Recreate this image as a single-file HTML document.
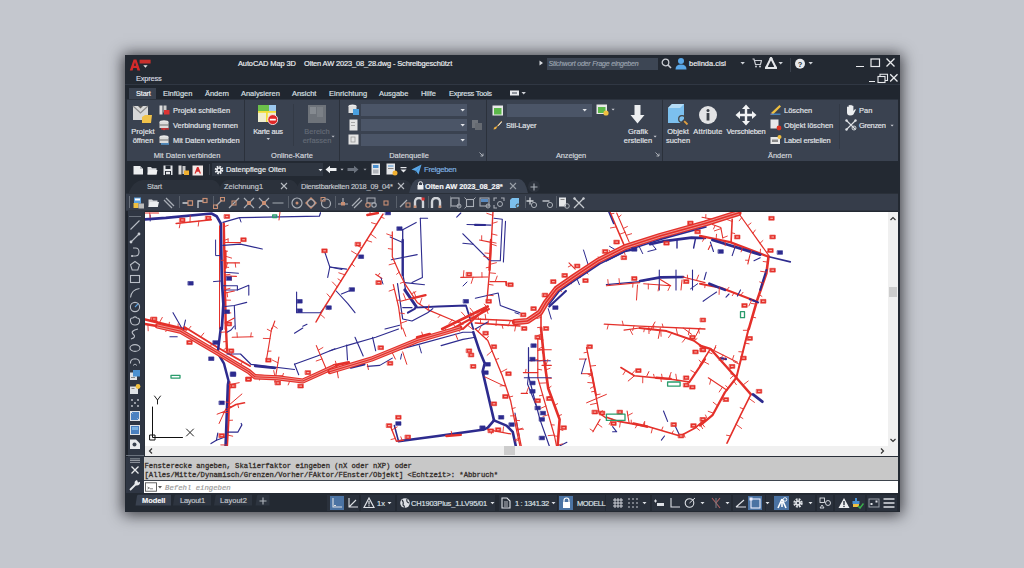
<!DOCTYPE html>
<html><head><meta charset="utf-8">
<style>
*{margin:0;padding:0;box-sizing:border-box}
html,body{width:1024px;height:568px;overflow:hidden;background:#c4c7ce;font-family:"Liberation Sans",sans-serif;position:relative}
.a{position:absolute;display:block}
#win{position:absolute;left:125px;top:55px;width:775px;height:457px;background:#232932;box-shadow:0 1px 14px 2px rgba(15,15,20,0.75);overflow:hidden}
.t{position:absolute;white-space:nowrap;line-height:10px;height:10px;-webkit-text-stroke:0.18px currentColor}
</style></head><body>
<div id="win">
<div class="a" style="left:0px;top:0px;width:774px;height:28px;background:#232932;"></div>
<div class="a" style="left:0px;top:28.6px;width:775px;height:1.4px;background:#303743;"></div>
<svg class="a" style="left:4px;top:3px;" width="22" height="14" viewBox="0 0 22 14"><path d="M0.8 12.5 L4.6 1.5 L7.4 1.5 L11.2 12.5 L8.4 12.5 L7.7 10 L4.3 10 L3.6 12.5Z M4.9 7.8 L7.1 7.8 L6 4.3Z" fill="#d42a2a"/><rect x="10.6" y="1.7" width="11" height="3.8" fill="#c9302c"/><path d="M14.3 7.2 L18.6 7.2 L16.45 9.8Z" fill="#e8e8e8"/></svg>
<div class="t" style="left:11.0px;top:19.2px;font-size:8.0px;color:#d9dce1;font-weight:normal;font-style:normal;font-family:'Liberation Sans',sans-serif;letter-spacing:-0.1935483870967742px;transform:scaleX(0.93);transform-origin:left center;">Express</div>
<div class="t" style="left:113.3px;top:3.8px;font-size:8.0px;color:#eef0f3;font-weight:normal;font-style:normal;font-family:'Liberation Sans',sans-serif;letter-spacing:-0.10752688172043011px;transform:scaleX(0.93);transform-origin:left center;">AutoCAD Map 3D</div>
<div class="t" style="left:178.8px;top:3.8px;font-size:8.0px;color:#eef0f3;font-weight:normal;font-style:normal;font-family:'Liberation Sans',sans-serif;letter-spacing:-0.15053763440860216px;transform:scaleX(0.93);transform-origin:left center;">Olten AW 2023_08_28.dwg - Schreibgeschützt</div>
<svg class="a" style="left:414px;top:5px;" width="5" height="6" viewBox="0 0 5 6"><path d="M0.5 0.5 L4 3 L0.5 5.5Z" fill="#d8dbe0"/></svg>
<div class="a" style="left:421.5px;top:2.5px;width:111px;height:12.5px;background:#3d4654;"></div>
<div class="t" style="left:423.5px;top:4.1px;font-size:7.0px;color:#9aa2ae;font-weight:normal;font-style:italic;font-family:'Liberation Sans',sans-serif;letter-spacing:-0.2px;">Stichwort oder Frage eingeben</div>
<svg class="a" style="left:536px;top:3px;" width="11" height="11" viewBox="0 0 11 11"><circle cx="4.5" cy="4.5" r="3.3" fill="none" stroke="#c9ccd2" stroke-width="1.3"/><path d="M7 7 L10 10" stroke="#c9ccd2" stroke-width="1.6"/></svg>
<svg class="a" style="left:550px;top:2px;" width="12" height="13" viewBox="0 0 12 13"><circle cx="6" cy="4" r="3" fill="#5aa8e8"/><path d="M0.5 12.5 Q0.5 7.5 6 7.5 Q11.5 7.5 11.5 12.5Z" fill="#5aa8e8"/></svg>
<div class="t" style="left:564.0px;top:4.0px;font-size:8.0px;color:#eef0f3;font-weight:normal;font-style:normal;font-family:'Liberation Sans',sans-serif;letter-spacing:0.02150537634408601px;transform:scaleX(0.93);transform-origin:left center;">belinda.cisl</div>
<svg class="a" style="left:615.3px;top:6.3px;" width="5.4" height="4.4" viewBox="0 0 5.4 4.4"><path d="M0.5 1.10 L4.90 1.10 L2.70 3.52Z" fill="#d0d3d8"/></svg>
<svg class="a" style="left:627px;top:3px;" width="10" height="10" viewBox="0 0 10 10"><path d="M0.5 1 L2 1 L3.5 6.5 L8.5 6.5 L9.5 2.5 L2.7 2.5" fill="none" stroke="#c9ccd2" stroke-width="1.2"/><circle cx="4" cy="8.5" r="1" fill="#c9ccd2"/><circle cx="8" cy="8.5" r="1" fill="#c9ccd2"/></svg>
<svg class="a" style="left:640px;top:2px;" width="12" height="12" viewBox="0 0 12 12"><path d="M6 1 L11 11 L1 11Z" fill="none" stroke="#e5e7ea" stroke-width="2"/><circle cx="6" cy="1.8" r="1.6" fill="#e5e7ea"/><circle cx="1.8" cy="10.5" r="1.6" fill="#e5e7ea"/><circle cx="10.2" cy="10.5" r="1.6" fill="#e5e7ea"/></svg>
<svg class="a" style="left:653.3px;top:6.3px;" width="5.4" height="4.4" viewBox="0 0 5.4 4.4"><path d="M0.5 1.10 L4.90 1.10 L2.70 3.52Z" fill="#d0d3d8"/></svg>
<div class="a" style="left:664.5px;top:2.5px;width:1px;height:14px;background:#3a414c;"></div>
<svg class="a" style="left:669px;top:3px;" width="12" height="12" viewBox="0 0 12 12"><circle cx="6" cy="5.8" r="5" fill="#e8eaed"/><text x="6" y="8.6" font-size="7.5" font-weight="bold" text-anchor="middle" fill="#2a2f37" font-family="Liberation Sans">?</text></svg>
<svg class="a" style="left:683.3px;top:6.3px;" width="5.4" height="4.4" viewBox="0 0 5.4 4.4"><path d="M0.5 1.10 L4.90 1.10 L2.70 3.52Z" fill="#d0d3d8"/></svg>
<div class="a" style="left:731px;top:10.5px;width:8px;height:1.3px;background:#e8eaed;"></div>
<svg class="a" style="left:745px;top:3px;" width="11" height="10" viewBox="0 0 11 10"><rect x="1" y="1" width="8.5" height="7.5" fill="none" stroke="#e8eaed" stroke-width="1.2"/></svg>
<svg class="a" style="left:760px;top:2px;" width="11" height="11" viewBox="0 0 11 11"><path d="M1.5 1.5 L9.5 9.5 M9.5 1.5 L1.5 9.5" stroke="#e8eaed" stroke-width="1.3"/></svg>
<div class="a" style="left:744px;top:25.5px;width:6px;height:1.3px;background:#e8eaed;"></div>
<svg class="a" style="left:752px;top:18px;" width="12" height="11" viewBox="0 0 12 11"><rect x="1" y="3.5" width="7" height="6" fill="none" stroke="#e8eaed" stroke-width="1.1"/><path d="M3 3.5 V1.2 H10.5 V7.5 H8" fill="none" stroke="#e8eaed" stroke-width="1.1"/></svg>
<svg class="a" style="left:764px;top:18px;" width="10" height="10" viewBox="0 0 10 10"><path d="M1.2 1.2 L8.5 8.5 M8.5 1.2 L1.2 8.5" stroke="#e8eaed" stroke-width="1.3"/></svg>
<div class="a" style="left:0px;top:30px;width:775px;height:14px;background:#20262f;"></div>
<div class="a" style="left:4px;top:32.5px;width:27px;height:12px;background:#3a4250;"></div>
<div class="t" style="left:10.7px;top:34.0px;font-size:8.0px;color:#f2f3f5;font-weight:normal;font-style:normal;font-family:'Liberation Sans',sans-serif;letter-spacing:-0.21505376344086022px;transform:scaleX(0.93);transform-origin:left center;">Start</div>
<div class="t" style="left:37.7px;top:34.0px;font-size:8.0px;color:#dde0e5;font-weight:normal;font-style:normal;font-family:'Liberation Sans',sans-serif;letter-spacing:0.0px;transform:scaleX(0.93);transform-origin:left center;">Einfügen</div>
<div class="t" style="left:79.7px;top:34.0px;font-size:8.0px;color:#dde0e5;font-weight:normal;font-style:normal;font-family:'Liberation Sans',sans-serif;letter-spacing:0.0px;transform:scaleX(0.93);transform-origin:left center;">Ändern</div>
<div class="t" style="left:116.2px;top:34.0px;font-size:8.0px;color:#dde0e5;font-weight:normal;font-style:normal;font-family:'Liberation Sans',sans-serif;letter-spacing:0.0px;transform:scaleX(0.93);transform-origin:left center;">Analysieren</div>
<div class="t" style="left:167.0px;top:34.0px;font-size:8.0px;color:#dde0e5;font-weight:normal;font-style:normal;font-family:'Liberation Sans',sans-serif;letter-spacing:0.0px;transform:scaleX(0.93);transform-origin:left center;">Ansicht</div>
<div class="t" style="left:204.0px;top:34.0px;font-size:8.0px;color:#dde0e5;font-weight:normal;font-style:normal;font-family:'Liberation Sans',sans-serif;letter-spacing:0.0967741935483871px;transform:scaleX(0.93);transform-origin:left center;">Einrichtung</div>
<div class="t" style="left:254.4px;top:34.0px;font-size:8.0px;color:#dde0e5;font-weight:normal;font-style:normal;font-family:'Liberation Sans',sans-serif;letter-spacing:0.0px;transform:scaleX(0.93);transform-origin:left center;">Ausgabe</div>
<div class="t" style="left:295.7px;top:34.0px;font-size:8.0px;color:#dde0e5;font-weight:normal;font-style:normal;font-family:'Liberation Sans',sans-serif;letter-spacing:0.0px;transform:scaleX(0.93);transform-origin:left center;">Hilfe</div>
<div class="t" style="left:323.6px;top:34.0px;font-size:8.0px;color:#dde0e5;font-weight:normal;font-style:normal;font-family:'Liberation Sans',sans-serif;letter-spacing:-0.27956989247311825px;transform:scaleX(0.93);transform-origin:left center;">Express Tools</div>
<svg class="a" style="left:384px;top:34px;" width="11" height="8" viewBox="0 0 11 8"><rect x="1" y="1.5" width="9" height="5" fill="#e8eaed"/><rect x="3" y="3.5" width="5" height="1" fill="#3a4250"/></svg>
<svg class="a" style="left:396.3px;top:36.3px;" width="5.4" height="4.4" viewBox="0 0 5.4 4.4"><path d="M0.5 1.10 L4.90 1.10 L2.70 3.52Z" fill="#d0d3d8"/></svg>
<div class="a" style="left:2px;top:44px;width:771px;height:62px;background:#3a4250;"></div>
<div class="a" style="left:2px;top:44px;width:771px;height:1px;background:#2c333e;"></div>
<div class="a" style="left:119.4px;top:44px;width:1px;height:62px;background:#2b313b;"></div>
<div class="a" style="left:214px;top:44px;width:1px;height:62px;background:#2b313b;"></div>
<div class="a" style="left:361px;top:44px;width:1px;height:62px;background:#2b313b;"></div>
<div class="a" style="left:537.4px;top:44px;width:1px;height:62px;background:#2b313b;"></div>
<svg class="a" style="left:7px;top:49px;" width="22" height="21" viewBox="0 0 22 21"><rect x="1" y="2" width="15" height="14" fill="#d8d8d8"/><path d="M1 2 L8.5 9 L16 2" fill="none" stroke="#8a8a8a" stroke-width="1.2"/><path d="M6 2 L8.5 4.5 L11 2Z" fill="#555"/><path d="M10 13 L13 11 L20 11 L19 19 L10 19Z" fill="#f0c24a"/></svg>
<div class="t" style="left:-82.0px;width:200px;text-align:center;top:71.8px;font-size:8.0px;color:#e3e6ea;font-weight:normal;font-style:normal;font-family:'Liberation Sans',sans-serif;letter-spacing:0.02150537634408601px;transform:scaleX(0.93);transform-origin:center center;">Projekt</div>
<div class="t" style="left:-82.0px;width:200px;text-align:center;top:81.2px;font-size:8.0px;color:#e3e6ea;font-weight:normal;font-style:normal;font-family:'Liberation Sans',sans-serif;letter-spacing:0.02150537634408601px;transform:scaleX(0.93);transform-origin:center center;">öffnen</div>
<svg class="a" style="left:34px;top:50px;" width="11" height="10" viewBox="0 0 11 10"><rect x="0.5" y="0.5" width="3" height="9" fill="#ddd"/><rect x="4.5" y="0.5" width="3" height="7" fill="#ccc"/><rect x="5" y="5" width="5.5" height="4.5" fill="#d33"/></svg>
<svg class="a" style="left:34px;top:65px;" width="11" height="11" viewBox="0 0 11 11"><ellipse cx="5" cy="2" rx="4.5" ry="1.7" fill="#e8e8e8"/><rect x="0.5" y="2" width="9" height="6" fill="#dcdcdc"/><rect x="0.5" y="4.6" width="9" height="0.8" fill="#555"/><path d="M3 8.5 L7 8.5 L5 10.5Z" fill="#d33"/><rect x="2" y="8.3" width="8" height="1.2" fill="#d33"/></svg>
<svg class="a" style="left:34px;top:80px;" width="11" height="11" viewBox="0 0 11 11"><ellipse cx="5" cy="2" rx="4.5" ry="1.7" fill="#e8e8e8"/><rect x="0.5" y="2" width="9" height="6" fill="#dcdcdc"/><rect x="0.5" y="4.6" width="9" height="0.8" fill="#555"/><rect x="2" y="8.3" width="8" height="1.3" fill="#5aa8e8"/></svg>
<div class="t" style="left:47.6px;top:51.0px;font-size:8.0px;color:#e3e6ea;font-weight:normal;font-style:normal;font-family:'Liberation Sans',sans-serif;letter-spacing:0.0px;transform:scaleX(0.93);transform-origin:left center;">Projekt schließen</div>
<div class="t" style="left:47.6px;top:66.3px;font-size:8.0px;color:#e3e6ea;font-weight:normal;font-style:normal;font-family:'Liberation Sans',sans-serif;letter-spacing:0.0px;transform:scaleX(0.93);transform-origin:left center;">Verbindung trennen</div>
<div class="t" style="left:47.6px;top:81.0px;font-size:8.0px;color:#e3e6ea;font-weight:normal;font-style:normal;font-family:'Liberation Sans',sans-serif;letter-spacing:0.0px;transform:scaleX(0.93);transform-origin:left center;">Mit Daten verbinden</div>
<div class="t" style="left:-38.5px;width:200px;text-align:center;top:96.1px;font-size:8.0px;color:#d6d9de;font-weight:normal;font-style:normal;font-family:'Liberation Sans',sans-serif;letter-spacing:0.0px;transform:scaleX(0.93);transform-origin:center center;">Mit Daten verbinden</div>
<svg class="a" style="left:132px;top:49px;" width="21" height="21" viewBox="0 0 21 21"><rect x="1" y="1" width="18" height="17" fill="#f0eed0"/><rect x="1" y="1" width="11" height="6" fill="#6cc04a"/><rect x="12" y="1" width="7" height="6" fill="#9cc8ee"/><rect x="1" y="7" width="18" height="1.8" fill="#f2de3a"/><rect x="9" y="7" width="1.8" height="11" fill="#f2de3a"/><circle cx="15.8" cy="15.6" r="5" fill="#e02828" stroke="#fff" stroke-width="0.8"/><rect x="12.8" y="14.8" width="6" height="1.7" fill="#fff"/></svg>
<div class="t" style="left:43.0px;width:200px;text-align:center;top:71.8px;font-size:8.0px;color:#e3e6ea;font-weight:normal;font-style:normal;font-family:'Liberation Sans',sans-serif;letter-spacing:-0.25806451612903225px;transform:scaleX(0.93);transform-origin:center center;">Karte aus</div>
<svg class="a" style="left:140.7px;top:82.2px;" width="4.6" height="3.6" viewBox="0 0 4.6 3.6"><path d="M0.5 0.90 L4.10 0.90 L2.30 2.88Z" fill="#c9ccd2"/></svg>
<div class="a" style="left:168.3px;top:49px;width:1px;height:42px;background:#333a46;"></div>
<svg class="a" style="left:182px;top:49px;" width="20" height="21" viewBox="0 0 20 21"><rect x="1" y="1" width="18" height="18" fill="#6e737a"/><rect x="3" y="3" width="6" height="7" fill="#858a90"/><rect x="10" y="3" width="6" height="10" fill="#7b8086"/></svg>
<div class="t" style="left:92.0px;width:200px;text-align:center;top:71.8px;font-size:8.0px;color:#646b77;font-weight:normal;font-style:normal;font-family:'Liberation Sans',sans-serif;letter-spacing:0.02150537634408601px;transform:scaleX(0.93);transform-origin:center center;">Bereich</div>
<div class="t" style="left:92.0px;width:200px;text-align:center;top:81.2px;font-size:8.0px;color:#646b77;font-weight:normal;font-style:normal;font-family:'Liberation Sans',sans-serif;letter-spacing:0.02150537634408601px;transform:scaleX(0.93);transform-origin:center center;">erfassen</div>
<svg class="a" style="left:206.4px;top:80.4px;" width="4.2" height="3.2" viewBox="0 0 4.2 3.2"><path d="M0.5 0.80 L3.70 0.80 L2.10 2.56Z" fill="#b9bcc2"/></svg>
<div class="t" style="left:67.0px;width:200px;text-align:center;top:96.1px;font-size:8.0px;color:#d6d9de;font-weight:normal;font-style:normal;font-family:'Liberation Sans',sans-serif;letter-spacing:0.0px;transform:scaleX(0.93);transform-origin:center center;">Online-Karte</div>
<svg class="a" style="left:223px;top:49px;" width="11" height="12" viewBox="0 0 11 12"><ellipse cx="4.5" cy="2" rx="4" ry="1.6" fill="#eee"/><rect x="0.5" y="2" width="8" height="7" fill="#e0e0e0"/><rect x="5" y="5" width="6" height="6" fill="#4aa0e0"/></svg>
<svg class="a" style="left:224px;top:64px;" width="9" height="12" viewBox="0 0 9 12"><rect x="0.5" y="0.5" width="8" height="11" fill="#e4e4e4"/><rect x="2" y="3" width="4" height="0.8" fill="#999"/><rect x="2" y="6" width="4" height="0.8" fill="#999"/></svg>
<svg class="a" style="left:223px;top:79px;" width="11" height="11" viewBox="0 0 11 11"><rect x="0.5" y="0.5" width="10" height="10" fill="#e4e4e4"/><rect x="3" y="3" width="4" height="5" fill="none" stroke="#999" stroke-width="0.8"/></svg>
<div class="a" style="left:235.5px;top:48.8px;width:106px;height:12.3px;background:#4b5567;"></div>
<svg class="a" style="left:334.8px;top:52.8px;" width="5.4" height="4.4" viewBox="0 0 5.4 4.4"><path d="M0.5 1.10 L4.90 1.10 L2.70 3.52Z" fill="#e4e6ea"/></svg>
<div class="a" style="left:235.5px;top:63.8px;width:106px;height:12.3px;background:#4b5567;"></div>
<svg class="a" style="left:334.8px;top:67.8px;" width="5.4" height="4.4" viewBox="0 0 5.4 4.4"><path d="M0.5 1.10 L4.90 1.10 L2.70 3.52Z" fill="#e4e6ea"/></svg>
<div class="a" style="left:235.5px;top:78.7px;width:106px;height:12.3px;background:#4b5567;"></div>
<svg class="a" style="left:334.8px;top:82.7px;" width="5.4" height="4.4" viewBox="0 0 5.4 4.4"><path d="M0.5 1.10 L4.90 1.10 L2.70 3.52Z" fill="#e4e6ea"/></svg>
<svg class="a" style="left:346px;top:64px;" width="12" height="12" viewBox="0 0 12 12"><rect x="1" y="1" width="6" height="8" fill="#6e737a"/><rect x="4" y="4" width="7" height="7" fill="#656a71"/></svg>
<div class="t" style="left:184.0px;width:200px;text-align:center;top:96.1px;font-size:8.0px;color:#d6d9de;font-weight:normal;font-style:normal;font-family:'Liberation Sans',sans-serif;letter-spacing:0.0px;transform:scaleX(0.93);transform-origin:center center;">Datenquelle</div>
<svg class="a" style="left:354px;top:97px;" width="5" height="5" viewBox="0 0 5 5"><path d="M0.5 0.5 L4 4 M4 1.5 V4 H1.5" stroke="#b6bac0" stroke-width="0.9" fill="none"/></svg>
<svg class="a" style="left:367px;top:50px;" width="12" height="11" viewBox="0 0 12 11"><rect x="0.5" y="0.5" width="10.5" height="10" fill="#e8e8e8"/><rect x="2" y="3" width="7.5" height="6.5" fill="#5cb84a"/></svg>
<div class="a" style="left:381.7px;top:48.5px;width:85.3px;height:13px;background:#4b5567;"></div>
<svg class="a" style="left:457.3px;top:52.8px;" width="5.4" height="4.4" viewBox="0 0 5.4 4.4"><path d="M0.5 1.10 L4.90 1.10 L2.70 3.52Z" fill="#e4e6ea"/></svg>
<svg class="a" style="left:471px;top:49px;" width="13" height="12" viewBox="0 0 13 12"><rect x="0.5" y="0.5" width="10.5" height="9.5" fill="#e8e8e8"/><rect x="2" y="3" width="7.5" height="6" fill="#5cb84a"/><circle cx="10" cy="9" r="2.6" fill="#f0c040"/></svg>
<svg class="a" style="left:485.9px;top:53.4px;" width="4.2" height="3.2" viewBox="0 0 4.2 3.2"><path d="M0.5 0.80 L3.70 0.80 L2.10 2.56Z" fill="#c9ccd2"/></svg>
<svg class="a" style="left:367px;top:65px;" width="11" height="11" viewBox="0 0 11 11"><path d="M1.5 9.5 Q2 6.5 4.5 6.5 L9.5 1 L10 1.5 L5 7 Q4.5 9.5 1.5 9.5Z" fill="#f0b040"/><path d="M6 5.5 L9.5 1.5 L10 2 L6.5 6Z" fill="#fff"/></svg>
<div class="t" style="left:381.0px;top:66.2px;font-size:8.0px;color:#e3e6ea;font-weight:normal;font-style:normal;font-family:'Liberation Sans',sans-serif;letter-spacing:-0.10752688172043011px;transform:scaleX(0.93);transform-origin:left center;">Stil-Layer</div>
<svg class="a" style="left:505px;top:49px;" width="16" height="21" viewBox="0 0 16 21"><path d="M4.5 1 H10.5 V11 H14.5 L7.5 19.5 L0.5 11 H4.5Z" fill="#eceef0"/></svg>
<div class="t" style="left:413.0px;width:200px;text-align:center;top:71.8px;font-size:8.0px;color:#e3e6ea;font-weight:normal;font-style:normal;font-family:'Liberation Sans',sans-serif;letter-spacing:0.02150537634408601px;transform:scaleX(0.93);transform-origin:center center;">Grafik</div>
<div class="t" style="left:413.0px;width:200px;text-align:center;top:81.2px;font-size:8.0px;color:#e3e6ea;font-weight:normal;font-style:normal;font-family:'Liberation Sans',sans-serif;letter-spacing:0.02150537634408601px;transform:scaleX(0.93);transform-origin:center center;">erstellen</div>
<svg class="a" style="left:527.5px;top:80.4px;" width="4.2" height="3.2" viewBox="0 0 4.2 3.2"><path d="M0.5 0.80 L3.70 0.80 L2.10 2.56Z" fill="#c9ccd2"/></svg>
<div class="t" style="left:346.0px;width:200px;text-align:center;top:96.1px;font-size:8.0px;color:#d6d9de;font-weight:normal;font-style:normal;font-family:'Liberation Sans',sans-serif;letter-spacing:-0.13978494623655913px;transform:scaleX(0.93);transform-origin:center center;">Anzeigen</div>
<svg class="a" style="left:530px;top:97px;" width="5" height="5" viewBox="0 0 5 5"><path d="M0.5 0.5 L4 4 M4 1.5 V4 H1.5" stroke="#b6bac0" stroke-width="0.9" fill="none"/></svg>
<svg class="a" style="left:541px;top:48px;" width="23" height="22" viewBox="0 0 23 22"><path d="M2 5 L6 1 L18 1 L18 16 L14 20 L2 20Z" fill="#7cc0ee"/><path d="M2 5 L6 1 L18 1 L14 5Z" fill="#b6ddf6"/><circle cx="16" cy="16" r="3.3" fill="none" stroke="#444" stroke-width="1.3"/><path d="M18.2 18.2 L21.5 21.5" stroke="#e0a040" stroke-width="1.8"/></svg>
<div class="t" style="left:453.0px;width:200px;text-align:center;top:71.8px;font-size:8.0px;color:#e3e6ea;font-weight:normal;font-style:normal;font-family:'Liberation Sans',sans-serif;letter-spacing:0.02150537634408601px;transform:scaleX(0.93);transform-origin:center center;">Objekt</div>
<div class="t" style="left:453.0px;width:200px;text-align:center;top:81.2px;font-size:8.0px;color:#e3e6ea;font-weight:normal;font-style:normal;font-family:'Liberation Sans',sans-serif;letter-spacing:0.02150537634408601px;transform:scaleX(0.93);transform-origin:center center;">suchen</div>
<svg class="a" style="left:573px;top:50px;" width="20" height="20" viewBox="0 0 20 20"><circle cx="10" cy="10" r="9" fill="#e2e3e5"/><circle cx="10" cy="5.5" r="1.5" fill="#3a3f46"/><rect x="8.6" y="8" width="2.8" height="7.5" fill="#3a3f46"/></svg>
<div class="t" style="left:482.7px;width:200px;text-align:center;top:71.8px;font-size:8.0px;color:#e3e6ea;font-weight:normal;font-style:normal;font-family:'Liberation Sans',sans-serif;letter-spacing:0.2043010752688172px;transform:scaleX(0.93);transform-origin:center center;">Attribute</div>
<svg class="a" style="left:610px;top:49px;" width="22" height="22" viewBox="0 0 22 22"><path d="M11 0.5 L15 5 H12.2 V9.8 H17 V7 L21.5 11 L17 15 V12.2 H12.2 V17 H15 L11 21.5 L7 17 H9.8 V12.2 H5 V15 L0.5 11 L5 7 V9.8 H9.8 V5 H7Z" fill="#f2f3f5"/></svg>
<div class="t" style="left:520.8px;width:200px;text-align:center;top:71.8px;font-size:8.0px;color:#e3e6ea;font-weight:normal;font-style:normal;font-family:'Liberation Sans',sans-serif;letter-spacing:-0.18279569892473121px;transform:scaleX(0.93);transform-origin:center center;">Verschieben</div>
<svg class="a" style="left:645px;top:49px;" width="12" height="11" viewBox="0 0 12 11"><path d="M1 9 L9.5 1 L11 2.5 L3 10.5Z" fill="#f0c040"/><path d="M1 9 L3 10.5 L0.5 11Z" fill="#e05030"/><rect x="0.5" y="9.6" width="10" height="1.2" fill="#4a90d0"/></svg>
<svg class="a" style="left:645px;top:64px;" width="12" height="12" viewBox="0 0 12 12"><rect x="0.5" y="0.5" width="8" height="9" fill="#e8e8e8"/><circle cx="9" cy="9" r="2.4" fill="#d32"/></svg>
<svg class="a" style="left:645px;top:79px;" width="12" height="11" viewBox="0 0 12 11"><rect x="0.5" y="3" width="9.5" height="7" fill="#e8e8e8"/><rect x="2" y="5.5" width="6" height="2.5" fill="#888"/><circle cx="9.5" cy="3" r="2" fill="#f0c040"/></svg>
<div class="t" style="left:658.5px;top:51.0px;font-size:8.0px;color:#e3e6ea;font-weight:normal;font-style:normal;font-family:'Liberation Sans',sans-serif;letter-spacing:0.02150537634408601px;transform:scaleX(0.93);transform-origin:left center;">Löschen</div>
<div class="t" style="left:658.5px;top:66.2px;font-size:8.0px;color:#e3e6ea;font-weight:normal;font-style:normal;font-family:'Liberation Sans',sans-serif;letter-spacing:0.0px;transform:scaleX(0.93);transform-origin:left center;">Objekt löschen</div>
<div class="t" style="left:658.5px;top:81.0px;font-size:8.0px;color:#e3e6ea;font-weight:normal;font-style:normal;font-family:'Liberation Sans',sans-serif;letter-spacing:-0.13978494623655913px;transform:scaleX(0.93);transform-origin:left center;">Label erstellen</div>
<div class="t" style="left:555.0px;width:200px;text-align:center;top:96.1px;font-size:8.0px;color:#d6d9de;font-weight:normal;font-style:normal;font-family:'Liberation Sans',sans-serif;letter-spacing:0.0px;transform:scaleX(0.93);transform-origin:center center;">Ändern</div>
<div class="a" style="left:714.4px;top:48.7px;width:1px;height:45px;background:#333a46;"></div>
<svg class="a" style="left:720px;top:49px;" width="12" height="12" viewBox="0 0 12 12"><path d="M2 6 V3 Q2.8 2.2 3.6 3 V6 V1.5 Q4.4 0.7 5.2 1.5 V6 V1.2 Q6 0.4 6.8 1.2 V6 V2 Q7.6 1.2 8.4 2 V7 L9.6 5.4 Q10.6 4.8 11 5.6 L8.4 10.5 Q7.5 11.5 5 11.5 Q2 11.5 2 8.5Z" fill="#eceef0"/></svg>
<div class="t" style="left:733.7px;top:51.1px;font-size:8.0px;color:#e3e6ea;font-weight:normal;font-style:normal;font-family:'Liberation Sans',sans-serif;letter-spacing:0.02150537634408601px;transform:scaleX(0.93);transform-origin:left center;">Pan</div>
<svg class="a" style="left:720px;top:64px;" width="12" height="12" viewBox="0 0 12 12"><path d="M1.5 1.5 L10.5 10.5 M10.5 1.5 L1.5 10.5" stroke="#dfe2e6" stroke-width="1.1"/><circle cx="1.5" cy="1.5" r="1.2" fill="#dfe2e6"/><circle cx="10.5" cy="1.5" r="1.2" fill="#dfe2e6"/><circle cx="1.5" cy="10.5" r="1.2" fill="#dfe2e6"/><circle cx="9" cy="9" r="2" fill="none" stroke="#dfe2e6" stroke-width="0.9"/></svg>
<div class="t" style="left:733.7px;top:66.2px;font-size:8.0px;color:#e3e6ea;font-weight:normal;font-style:normal;font-family:'Liberation Sans',sans-serif;letter-spacing:-0.3010752688172043px;transform:scaleX(0.93);transform-origin:left center;">Grenzen</div>
<svg class="a" style="left:765.3px;top:68.9px;" width="4.2" height="3.2" viewBox="0 0 4.2 3.2"><path d="M0.5 0.80 L3.70 0.80 L2.10 2.56Z" fill="#c9ccd2"/></svg>
<div class="a" style="left:0px;top:106px;width:774px;height:16px;background:#232932;"></div>
<svg class="a" style="left:7.8px;top:109.5px;" width="12" height="11" viewBox="0 0 12 11"><path d="M0.5 1 H7 L10 4 V9.5 H0.5Z" fill="#eceef0"/><path d="M7 1 V4 H10" fill="#b8bbc0"/></svg>
<svg class="a" style="left:22px;top:109.5px;" width="12" height="11" viewBox="0 0 12 11"><path d="M0.5 2 H4 L5 3.2 H9.5 V9.5 H0.5Z" fill="#dadcdf"/><path d="M1.5 5 H10.5 L9.5 9.5 H0.5Z" fill="#f0f1f2"/></svg>
<svg class="a" style="left:38px;top:109.5px;" width="12" height="11" viewBox="0 0 12 11"><rect x="0.5" y="0.5" width="9" height="9.5" fill="#e4e6e9"/><rect x="2.5" y="0.5" width="5" height="3.5" fill="#232932"/><rect x="2" y="6" width="6" height="4" fill="#232932"/><rect x="3" y="6.8" width="4" height="2.5" fill="#e4e6e9"/></svg>
<svg class="a" style="left:53px;top:109.5px;" width="12" height="11" viewBox="0 0 12 11"><rect x="0.5" y="0.5" width="3" height="9" fill="#dcdcdc"/><rect x="4.5" y="1" width="3" height="8" fill="#c8c8c8"/><rect x="6" y="5.5" width="5" height="4.5" fill="#f0b030"/></svg>
<svg class="a" style="left:67px;top:109.5px;" width="12" height="11" viewBox="0 0 12 11"><rect x="0.5" y="0.5" width="10.5" height="10" fill="#f2e8e6"/><path d="M2.5 8.5 L5 2 L6.5 2 L9 8.5 L7.6 8.5 L7 6.8 L4.5 6.8 L3.9 8.5Z" fill="#d42a2a"/></svg>
<div class="a" style="left:83.6px;top:109px;width:1px;height:11px;background:#3c434e;"></div>
<div class="a" style="left:87px;top:108px;width:111px;height:12.6px;background:#2f3641;"></div>
<svg class="a" style="left:88.5px;top:109.5px;" width="10" height="10" viewBox="0 0 10 10"><circle cx="5" cy="5" r="3.2" fill="none" stroke="#eceef0" stroke-width="2.2" stroke-dasharray="1.6 0.9"/><circle cx="5" cy="5" r="2.6" fill="#eceef0"/><circle cx="5" cy="5" r="1.2" fill="#2f3641"/></svg>
<div class="t" style="left:100.6px;top:110.4px;font-size:8.0px;color:#eceef0;font-weight:normal;font-style:normal;font-family:'Liberation Sans',sans-serif;letter-spacing:0.0px;transform:scaleX(0.93);transform-origin:left center;">Datenpflege Olten</div>
<svg class="a" style="left:192.5px;top:112.6px;" width="5" height="4" viewBox="0 0 5 4"><path d="M0.5 1.00 L4.50 1.00 L2.50 3.20Z" fill="#e4e6ea"/></svg>
<svg class="a" style="left:200px;top:110px;" width="12" height="9" viewBox="0 0 12 9"><path d="M0.5 4.5 L5 0.8 V3 H11.5 V6 H5 V8.2Z" fill="#eceef0"/></svg>
<svg class="a" style="left:215.0px;top:113.1px;" width="4.0" height="3.0" viewBox="0 0 4.0 3.0"><path d="M0.5 0.75 L3.50 0.75 L2.00 2.40Z" fill="#c9ccd2"/></svg>
<svg class="a" style="left:222px;top:110px;" width="12" height="9" viewBox="0 0 12 9"><path d="M11.5 4.5 L7 0.8 V3 H0.5 V6 H7 V8.2Z" fill="#6a717c"/></svg>
<svg class="a" style="left:238.0px;top:113.1px;" width="4.0" height="3.0" viewBox="0 0 4.0 3.0"><path d="M0.5 0.75 L3.50 0.75 L2.00 2.40Z" fill="#9aa0a8"/></svg>
<svg class="a" style="left:246px;top:108px;" width="10" height="13" viewBox="0 0 10 13"><rect x="0.5" y="0.5" width="8.5" height="11.5" fill="#e4e6e9"/><rect x="2" y="2" width="5.5" height="3" fill="#4a90d0"/><rect x="2" y="6.5" width="5.5" height="4" fill="#b0b4ba"/></svg>
<svg class="a" style="left:261px;top:108px;" width="12" height="13" viewBox="0 0 12 13"><rect x="0.5" y="0.5" width="8.5" height="11" fill="#e4e6e9"/><rect x="2" y="2.5" width="5.5" height="1" fill="#4a90d0"/><rect x="2" y="5" width="5.5" height="1" fill="#888"/><circle cx="9" cy="10" r="2.5" fill="#f0b030"/></svg>
<svg class="a" style="left:275px;top:111px;" width="8" height="8" viewBox="0 0 8 8"><rect x="0.5" y="1" width="6" height="1.2" fill="#e4e6ea"/><path d="M0.5 3.5 H6.5 L3.5 6.5Z" fill="#e4e6ea"/></svg>
<svg class="a" style="left:286px;top:109px;" width="11" height="11" viewBox="0 0 11 11"><path d="M0.5 5.5 L10.5 0.5 L7.5 10.5 L5 7 Z" fill="#5aa8e8"/><path d="M5 7 L10.5 0.5 L4 9.5Z" fill="#3a88c8"/></svg>
<div class="t" style="left:299.0px;top:110.4px;font-size:7.8px;color:#7fb2e0;font-weight:normal;font-style:normal;font-family:'Liberation Sans',sans-serif;letter-spacing:-0.31px;">Freigeben</div>
<div class="a" style="left:0px;top:122px;width:774px;height:16px;background:#232932;"></div>
<svg class="a" style="left:0;top:122px" width="774" height="16" viewBox="0 0 774 16"><path d="M3.5 16 Q9 3.5 17.5 3 L88 3 Q94 4 97 16Z" fill="#2b313b"/><path d="M93 16 Q96 4 102 3 L166 3 Q172 4 175 16Z" fill="#2b313b"/><path d="M170 16 Q173 4 179 3 L280 3 Q286 4 289 16Z" fill="#2b313b"/><path d="M284 16 Q287 2.5 293 2 L394 2 Q400 2.5 403 16Z" fill="#3a4250"/><circle cx="409" cy="9.5" r="6" fill="#2b313b"/></svg>
<div class="t" style="left:21.5px;top:127.0px;font-size:8.0px;color:#c3c7cd;font-weight:normal;font-style:normal;font-family:'Liberation Sans',sans-serif;letter-spacing:-0.19354838709677424px;transform:scaleX(0.93);transform-origin:left center;">Start</div>
<div class="t" style="left:98.6px;top:127.0px;font-size:8.0px;color:#c3c7cd;font-weight:normal;font-style:normal;font-family:'Liberation Sans',sans-serif;letter-spacing:0.02150537634408601px;transform:scaleX(0.93);transform-origin:left center;">Zeichnung1</div>
<svg class="a" style="left:154.5px;top:127px;" width="8" height="8" viewBox="0 0 8 8"><path d="M1 1 L7 7 M7 1 L1 7" stroke="#b8bcc2" stroke-width="1.1"/></svg>
<div class="t" style="left:175.5px;top:127.0px;font-size:8.0px;color:#c3c7cd;font-weight:normal;font-style:normal;font-family:'Liberation Sans',sans-serif;letter-spacing:-0.25806451612903225px;transform:scaleX(0.93);transform-origin:left center;">Dienstbarkeiten 2018_09_04*</div>
<svg class="a" style="left:271.5px;top:127px;" width="8" height="8" viewBox="0 0 8 8"><path d="M1 1 L7 7 M7 1 L1 7" stroke="#b8bcc2" stroke-width="1.1"/></svg>
<svg class="a" style="left:291.5px;top:126px;" width="7" height="9" viewBox="0 0 7 9"><path d="M1.5 4 V2.6 Q1.5 0.7 3.5 0.7 Q5.5 0.7 5.5 2.6 V4" fill="none" stroke="#f0f1f3" stroke-width="1"/><rect x="0.5" y="4" width="6" height="4.5" fill="#f0f1f3"/></svg>
<div class="t" style="left:299.5px;top:126.8px;font-size:8.0px;color:#f4f5f7;font-weight:bold;font-style:normal;font-family:'Liberation Sans',sans-serif;letter-spacing:-0.08602150537634409px;transform:scaleX(0.93);transform-origin:left center;">Olten AW 2023_08_28*</div>
<svg class="a" style="left:383.5px;top:127px;" width="8" height="8" viewBox="0 0 8 8"><path d="M1 1 L7 7 M7 1 L1 7" stroke="#9aa0a8" stroke-width="1.1"/></svg>
<svg class="a" style="left:405px;top:127.5px;" width="8" height="8" viewBox="0 0 8 8"><path d="M4 0.5 V7.5 M0.5 4 H7.5" stroke="#aab0b8" stroke-width="1.1"/></svg>
<div class="a" style="left:1px;top:138px;width:772px;height:18px;background:#363d4a;"></div>
<div class="a" style="left:1px;top:138px;width:772px;height:1px;background:#2a3039;"></div>
<div class="a" style="left:1px;top:155px;width:772px;height:1px;background:#2f3540;"></div>
<div class="a" style="left:4px;top:141px;width:1.3px;height:12px;background:#6a717c;"></div>
<svg class="a" style="left:8px;top:142px;" width="12" height="12" viewBox="0 0 12 12"><rect x="1" y="0.5" width="7" height="6" fill="#5aa0e0"/><rect x="2" y="1.5" width="5" height="2" fill="#fff"/><rect x="0.5" y="6" width="5" height="5" fill="#f0c040"/><rect x="5.5" y="6.5" width="5.5" height="5" fill="#bbb"/></svg>
<svg class="a" style="left:23px;top:142px;" width="12" height="12" viewBox="0 0 12 12"><path d="M0.5 2.5 H4 L5 3.5 H9.5 V10 H0.5Z" fill="#d4d6d9"/><path d="M1.8 5 H11 L9.8 10 H0.5Z" fill="#eceef0"/></svg>
<svg class="a" style="left:37.5px;top:142px;" width="12" height="12" viewBox="0 0 12 12"><path d="M1 3 L9 11 M3 1 L11 9" stroke="#a9aeb6" stroke-width="1.3"/></svg>
<div class="a" style="left:54px;top:141px;width:1.3px;height:12px;background:#59606b;"></div>
<svg class="a" style="left:56.5px;top:142px;" width="12" height="12" viewBox="0 0 12 12"><path d="M0.5 6 H6" stroke="#c6cacf" stroke-width="1.6"/><rect x="6" y="3.8" width="4.5" height="4.5" fill="none" stroke="#c98f74" stroke-width="1.2"/></svg>
<svg class="a" style="left:71px;top:142px;" width="12" height="12" viewBox="0 0 12 12"><path d="M2 11 V4 H7" stroke="#c6cacf" stroke-width="1.3" fill="none"/><rect x="7" y="1.5" width="4" height="4" fill="none" stroke="#c98f74" stroke-width="1.2"/></svg>
<div class="a" style="left:88px;top:141px;width:1.3px;height:12px;background:#59606b;"></div>
<svg class="a" style="left:88px;top:142px;" width="12" height="12" viewBox="0 0 12 12"><path d="M3 9 L9 3" stroke="#a9aeb6" stroke-width="1.2"/><rect x="0.5" y="8" width="4" height="3.5" fill="none" stroke="#c98f74" stroke-width="1.1"/><rect x="7.5" y="0.5" width="4" height="3.5" fill="none" stroke="#c98f74" stroke-width="1.1"/></svg>
<svg class="a" style="left:103px;top:142px;" width="12" height="12" viewBox="0 0 12 12"><path d="M1 11 L11 1" stroke="#a9aeb6" stroke-width="1.2"/><rect x="4" y="4" width="4" height="4" fill="none" stroke="#c98f74" stroke-width="1.1"/></svg>
<svg class="a" style="left:118px;top:142px;" width="12" height="12" viewBox="0 0 12 12"><path d="M1 1 L11 11 M11 1 L1 11" stroke="#a9aeb6" stroke-width="1.2"/><rect x="4" y="4" width="4" height="4" fill="#c98f74"/></svg>
<svg class="a" style="left:133px;top:142px;" width="12" height="12" viewBox="0 0 12 12"><path d="M1 1 L11 11 M11 1 L1 11" stroke="#a9aeb6" stroke-width="1.2"/><rect x="4" y="4" width="4" height="4" fill="#c98f74"/></svg>
<svg class="a" style="left:147px;top:142px;" width="12" height="12" viewBox="0 0 12 12"><path d="M0.5 6 H11.5" stroke="#9ca2aa" stroke-width="1.1"/></svg>
<div class="a" style="left:163px;top:141px;width:1.3px;height:12px;background:#59606b;"></div>
<svg class="a" style="left:165.7px;top:142px;" width="12" height="12" viewBox="0 0 12 12"><circle cx="6" cy="6" r="5" fill="none" stroke="#a9aeb6" stroke-width="1.2"/><circle cx="6" cy="6" r="1.5" fill="#c98f74"/></svg>
<svg class="a" style="left:179.8px;top:142px;" width="12" height="12" viewBox="0 0 12 12"><path d="M6 1 L11 6 L6 11 L1 6Z" fill="none" stroke="#c98f74" stroke-width="1.4"/><circle cx="6" cy="6" r="3.5" fill="none" stroke="#a9aeb6" stroke-width="1"/></svg>
<svg class="a" style="left:194.6px;top:142px;" width="12" height="12" viewBox="0 0 12 12"><circle cx="6" cy="6.5" r="4.5" fill="none" stroke="#a9aeb6" stroke-width="1.2"/><rect x="1" y="0.5" width="4" height="3.5" fill="none" stroke="#c98f74" stroke-width="1"/></svg>
<div class="a" style="left:210px;top:141px;width:1.3px;height:12px;background:#59606b;"></div>
<svg class="a" style="left:211.8px;top:142px;" width="12" height="12" viewBox="0 0 12 12"><path d="M6 1 V6 M1 7 H11" stroke="#a9aeb6" stroke-width="1.2"/><rect x="4" y="5" width="4" height="3.5" fill="#c98f74"/></svg>
<svg class="a" style="left:225.9px;top:142px;" width="12" height="12" viewBox="0 0 12 12"><path d="M1 9 L9 1 M3 11 L11 3" stroke="#a9aeb6" stroke-width="1.2"/></svg>
<svg class="a" style="left:240px;top:142px;" width="12" height="12" viewBox="0 0 12 12"><rect x="2" y="1" width="8" height="5" fill="none" stroke="#a9aeb6" stroke-width="1"/><circle cx="3" cy="8" r="2.2" fill="none" stroke="#c98f74" stroke-width="1.1"/><circle cx="9" cy="8" r="2.2" fill="none" stroke="#a9aeb6" stroke-width="1.1"/></svg>
<svg class="a" style="left:254.8px;top:142px;" width="12" height="12" viewBox="0 0 12 12"><rect x="4" y="4" width="4" height="4" fill="none" stroke="#c98f74" stroke-width="1.1"/></svg>
<div class="a" style="left:271px;top:141px;width:1.3px;height:12px;background:#59606b;"></div>
<svg class="a" style="left:273.5px;top:142px;" width="12" height="12" viewBox="0 0 12 12"><path d="M1 10 L8 3" stroke="#a9aeb6" stroke-width="1.2"/><rect x="7" y="6" width="4" height="4" fill="none" stroke="#c98f74" stroke-width="1"/></svg>
<svg class="a" style="left:287.6px;top:142px;" width="12" height="12" viewBox="0 0 12 12"><path d="M2 11 V5 Q2 1 6 1 Q10 1 10 5 V11" fill="none" stroke="#d0d3d8" stroke-width="2.4"/><rect x="0.8" y="8.5" width="2.6" height="2.5" fill="#c98f74"/><rect x="8.6" y="0.5" width="3" height="3" fill="#d33"/></svg>
<div class="a" style="left:303px;top:141px;width:1.3px;height:12px;background:#59606b;"></div>
<svg class="a" style="left:304.5px;top:142px;" width="12" height="12" viewBox="0 0 12 12"><path d="M2 11 V5 Q2 1 6 1 Q10 1 10 5 V11" fill="none" stroke="#d0d3d8" stroke-width="2.4"/><rect x="8.6" y="8.5" width="2.6" height="2.5" fill="#c98f74"/></svg>
<div class="a" style="left:325px;top:141px;width:1.3px;height:12px;background:#59606b;"></div>
<svg class="a" style="left:325px;top:142px;" width="12" height="12" viewBox="0 0 12 12"><rect x="1" y="1" width="8" height="8" fill="none" stroke="#a9aeb6" stroke-width="1.1"/><circle cx="9" cy="9" r="2" fill="none" stroke="#a9aeb6" stroke-width="1"/></svg>
<svg class="a" style="left:339px;top:142px;" width="12" height="12" viewBox="0 0 12 12"><rect x="2.5" y="2.5" width="7" height="7" fill="none" stroke="#a9aeb6" stroke-width="1.1"/><path d="M0.5 0.5 L3 3 M11.5 0.5 L9 3 M0.5 11.5 L3 9" stroke="#a9aeb6" stroke-width="1"/></svg>
<svg class="a" style="left:354.4px;top:142px;" width="12" height="12" viewBox="0 0 12 12"><rect x="1" y="1" width="9" height="8" fill="none" stroke="#a9aeb6" stroke-width="1.1"/><rect x="2" y="2" width="7" height="3" fill="#5a8ac0"/><circle cx="9" cy="9" r="2" fill="none" stroke="#a9aeb6" stroke-width="1"/></svg>
<svg class="a" style="left:368.4px;top:142px;" width="12" height="12" viewBox="0 0 12 12"><path d="M1 4 V1 H4 M8 1 H11 V4 M1 8 V11 H4" stroke="#a9aeb6" stroke-width="1.1" fill="none"/><circle cx="7" cy="7" r="2.5" fill="none" stroke="#a9aeb6" stroke-width="1"/></svg>
<svg class="a" style="left:383.7px;top:142px;" width="12" height="12" viewBox="0 0 12 12"><path d="M1 3 L3 1 H10 V9 L8 11 H1Z" fill="#7cc0ee"/><circle cx="9" cy="9" r="2" fill="none" stroke="#444" stroke-width="1"/></svg>
<div class="a" style="left:400px;top:141px;width:1.3px;height:12px;background:#59606b;"></div>
<svg class="a" style="left:401px;top:142px;" width="12" height="12" viewBox="0 0 12 12"><path d="M4 0.5 V7.5 M0.5 4 H7.5" stroke="#d0d3d8" stroke-width="1.3"/><circle cx="8" cy="8" r="2.6" fill="none" stroke="#a9aeb6" stroke-width="1"/></svg>
<svg class="a" style="left:416.5px;top:142px;" width="12" height="12" viewBox="0 0 12 12"><path d="M0.5 4 H7.5" stroke="#d0d3d8" stroke-width="1.3"/><circle cx="8" cy="8" r="2.6" fill="none" stroke="#a9aeb6" stroke-width="1"/></svg>
<div class="a" style="left:431px;top:141px;width:1.3px;height:12px;background:#59606b;"></div>
<svg class="a" style="left:433px;top:142px;" width="12" height="12" viewBox="0 0 12 12"><rect x="1" y="0.5" width="7" height="9" fill="#e4e6e9"/><rect x="2.5" y="2" width="4" height="1" fill="#888"/><circle cx="9" cy="9" r="2.3" fill="none" stroke="#a9aeb6" stroke-width="1"/></svg>
<svg class="a" style="left:448px;top:142px;" width="12" height="12" viewBox="0 0 12 12"><path d="M1 1 L11 11 M11 1 L1 11" stroke="#c6cacf" stroke-width="1.3"/><circle cx="1.5" cy="1.5" r="1.2" fill="#c6cacf"/><circle cx="10.5" cy="1.5" r="1.2" fill="#c6cacf"/></svg>
<div class="a" style="left:3px;top:156px;width:16px;height:247px;background:#2f3643;"></div>
<div class="a" style="left:1px;top:156px;width:2px;height:247px;background:#1e232b;"></div>
<div class="a" style="left:19px;top:156px;width:1px;height:247px;background:#2a3039;"></div>
<div class="a" style="left:4px;top:160.5px;width:12px;height:1.2px;background:#6a717c;"></div>
<svg class="a" style="left:4px;top:163.7px;" width="12" height="12" viewBox="0 0 12 12"><path d="M1.5 10.5 L10.5 1.5" stroke="#b9bec6" stroke-width="1.1"/></svg>
<svg class="a" style="left:4px;top:177.39px;" width="12" height="12" viewBox="0 0 12 12"><path d="M1.5 10.5 L10.5 1.5" stroke="#b9bec6" stroke-width="1.1"/><circle cx="2" cy="10" r="1.4" fill="#c9cdd3"/><circle cx="10" cy="2" r="1.4" fill="#c9cdd3"/></svg>
<svg class="a" style="left:4px;top:191.07999999999998px;" width="12" height="12" viewBox="0 0 12 12"><path d="M3 10 H6.5 Q10 10 10 6 Q10 2 6.5 2 H4" fill="none" stroke="#b9bec6" stroke-width="1.1"/><circle cx="3" cy="10" r="1" fill="#c9cdd3"/></svg>
<svg class="a" style="left:4px;top:204.76999999999998px;" width="12" height="12" viewBox="0 0 12 12"><path d="M6 1.5 L10.5 4.8 L8.8 10 H3.2 L1.5 4.8Z" fill="none" stroke="#b9bec6" stroke-width="1.1"/></svg>
<svg class="a" style="left:4px;top:218.45999999999998px;" width="12" height="12" viewBox="0 0 12 12"><rect x="1.5" y="2.5" width="9" height="7" fill="none" stroke="#b9bec6" stroke-width="1.1"/></svg>
<svg class="a" style="left:4px;top:232.14999999999998px;" width="12" height="12" viewBox="0 0 12 12"><path d="M1.5 10.5 Q2.5 2.5 10.5 1.5" fill="none" stroke="#b9bec6" stroke-width="1.1"/></svg>
<svg class="a" style="left:4px;top:245.83999999999997px;" width="12" height="12" viewBox="0 0 12 12"><circle cx="6" cy="6" r="4.6" fill="none" stroke="#b9bec6" stroke-width="1.1"/><path d="M6 6 L9 3" stroke="#5aa0e0" stroke-width="1.1"/></svg>
<svg class="a" style="left:4px;top:259.53px;" width="12" height="12" viewBox="0 0 12 12"><path d="M1.5 6 Q1 2.5 4 3 Q6 0.8 8 3 Q11 3 10.5 6.5 Q10 10 6 10 Q2 10 1.5 6Z" fill="none" stroke="#b9bec6" stroke-width="1.1"/></svg>
<svg class="a" style="left:4px;top:273.21999999999997px;" width="12" height="12" viewBox="0 0 12 12"><path d="M2 11 Q8 9 4 6 Q1 3 9 1" fill="none" stroke="#b9bec6" stroke-width="1.1"/></svg>
<svg class="a" style="left:4px;top:286.90999999999997px;" width="12" height="12" viewBox="0 0 12 12"><ellipse cx="6" cy="6" rx="5" ry="3.4" fill="none" stroke="#b9bec6" stroke-width="1.1"/></svg>
<svg class="a" style="left:4px;top:300.6px;" width="12" height="12" viewBox="0 0 12 12"><path d="M1.5 7.5 Q1 3 6 2.8 Q11 3 10.5 7.5" fill="none" stroke="#b9bec6" stroke-width="1.1"/><path d="M4 9.5 L6 8 L8 9.5" fill="none" stroke="#b9bec6" stroke-width="0.9"/></svg>
<svg class="a" style="left:4px;top:314.28999999999996px;" width="12" height="12" viewBox="0 0 12 12"><rect x="1" y="3.5" width="7" height="7.5" fill="#dfe2e6"/><rect x="4" y="1" width="7" height="6.5" fill="#4a90d0"/><rect x="2" y="8" width="4" height="1" fill="#888"/></svg>
<svg class="a" style="left:4px;top:327.98px;" width="12" height="12" viewBox="0 0 12 12"><rect x="1" y="3.5" width="8" height="7.5" fill="#dfe2e6"/><rect x="2.5" y="5" width="3" height="1" fill="#888"/><circle cx="9" cy="3.5" r="2.4" fill="#f0c040"/></svg>
<svg class="a" style="left:4px;top:341.66999999999996px;" width="12" height="12" viewBox="0 0 12 12"><circle cx="3" cy="3" r="0.9" fill="#c9cdd3"/><circle cx="9" cy="3" r="0.9" fill="#c9cdd3"/><circle cx="6" cy="6" r="0.9" fill="#c9cdd3"/><circle cx="3" cy="9" r="0.9" fill="#c9cdd3"/><circle cx="9" cy="9" r="0.9" fill="#c9cdd3"/></svg>
<svg class="a" style="left:4px;top:355.36px;" width="12" height="12" viewBox="0 0 12 12"><rect x="1.5" y="1.5" width="9" height="9" fill="#4a80c0" stroke="#dfe2e6" stroke-width="1"/><path d="M1.5 1.5 L3.5 3.5 M10.5 10.5 L8.5 8.5" stroke="#dfe2e6" stroke-width="1"/></svg>
<svg class="a" style="left:4px;top:369.04999999999995px;" width="12" height="12" viewBox="0 0 12 12"><rect x="1.5" y="1.5" width="9" height="9" fill="#4a80c0" stroke="#dfe2e6" stroke-width="1"/><rect x="3" y="3" width="6" height="3" fill="#7ab0e0"/></svg>
<svg class="a" style="left:4px;top:382.74px;" width="12" height="12" viewBox="0 0 12 12"><path d="M1 1.5 H7 L11 5.5 V11 H1Z" fill="#e8eaed"/><circle cx="5.5" cy="6.5" r="2" fill="#3a4250"/></svg>
<div class="a" style="left:1px;top:399.5px;width:18px;height:1px;background:#6a717c;"></div>
<div class="a" style="left:20px;top:157px;width:753px;height:234px;background:#ffffff;"></div>
<div class="a" style="left:763px;top:157px;width:10px;height:234px;background:#f0f0f0;"></div>
<svg class="a" style="left:763px;top:159px;" width="10" height="10" viewBox="0 0 10 10"><path d="M2.5 6 L5 3.5 L7.5 6" fill="none" stroke="#333" stroke-width="1.2"/></svg>
<div class="a" style="left:763.5px;top:231.8px;width:8.5px;height:10.5px;background:#cdcdcd;"></div>
<svg class="a" style="left:763px;top:380px;" width="10" height="10" viewBox="0 0 10 10"><path d="M2.5 4 L5 6.5 L7.5 4" fill="none" stroke="#333" stroke-width="1.2"/></svg>
<div class="a" style="left:20px;top:391px;width:753px;height:9.5px;background:#f0f0f0;"></div>
<svg class="a" style="left:21px;top:391px;" width="10" height="10" viewBox="0 0 10 10"><path d="M6 2.5 L3.5 5 L6 7.5" fill="none" stroke="#333" stroke-width="1.2"/></svg>
<div class="a" style="left:379px;top:391.3px;width:11px;height:8.5px;background:#cdcdcd;"></div>
<svg class="a" style="left:752px;top:391px;" width="10" height="10" viewBox="0 0 10 10"><path d="M4 2.5 L6.5 5 L4 7.5" fill="none" stroke="#333" stroke-width="1.2"/></svg>
<div class="a" style="left:19px;top:400.5px;width:754px;height:1.5px;background:#2a3039;"></div>
<div class="a" style="left:1px;top:402px;width:18px;height:36px;background:#2f3643;"></div>
<svg class="a" style="left:4px;top:403px;" width="12" height="5" viewBox="0 0 12 5"><rect x="1" y="0.5" width="10" height="0.8" fill="#aeb3ba"/><rect x="1" y="2.2" width="10" height="0.8" fill="#aeb3ba"/><rect x="1" y="3.9" width="10" height="0.8" fill="#aeb3ba"/></svg>
<svg class="a" style="left:5px;top:410px;" width="10" height="10" viewBox="0 0 10 10"><path d="M1.5 1.5 L8.5 8.5 M8.5 1.5 L1.5 8.5" stroke="#e8eaed" stroke-width="1.3"/></svg>
<svg class="a" style="left:4px;top:423.5px;" width="12" height="12" viewBox="0 0 12 12"><path d="M1 11 L7 5" stroke="#e8eaed" stroke-width="1.8"/><path d="M6 6 Q4.5 2 8 1 L9 3.5 L11 2.8 Q11.5 6.5 7.5 6.5" fill="#e8eaed"/></svg>
<div class="a" style="left:19px;top:402px;width:754px;height:24px;background:#c8c8c8;"></div>
<div class="t" style="left:19.5px;top:406.2px;font-size:7.2px;color:#2a2624;font-weight:normal;font-style:normal;font-family:'Liberation Mono',monospace;letter-spacing:0px;-webkit-text-stroke:0.3px #3a3430;">Fensterecke angeben, Skalierfaktor eingeben (nX oder nXP) oder</div>
<div class="t" style="left:19.5px;top:415.4px;font-size:7.2px;color:#2a2624;font-weight:normal;font-style:normal;font-family:'Liberation Mono',monospace;letter-spacing:0px;-webkit-text-stroke:0.3px #3a3430;">[Alles/Mitte/Dynamisch/Grenzen/Vorher/FAktor/FEnster/Objekt] &lt;Echtzeit&gt;: *Abbruch*</div>
<div class="a" style="left:19px;top:426px;width:754px;height:12px;background:#ffffff;"></div>
<div class="a" style="left:19px;top:425.2px;width:754px;height:1px;background:#3d434c;"></div>
<svg class="a" style="left:20px;top:427px;" width="19" height="10" viewBox="0 0 19 10"><rect x="0.5" y="0.8" width="11" height="8.4" fill="none" stroke="#555" stroke-width="0.9"/><path d="M2.5 5 L4.5 6 L2.5 7" fill="none" stroke="#555" stroke-width="0.7"/><rect x="5" y="6.5" width="3" height="0.7" fill="#555"/><path d="M13 4 L17 4 L15 6.5Z" fill="#555"/></svg>
<div class="t" style="left:40.0px;top:427.6px;font-size:7.3px;color:#9a9a9a;font-weight:normal;font-style:italic;font-family:'Liberation Mono',monospace;letter-spacing:0px;">Befehl eingeben</div>
<div class="a" style="left:0px;top:438px;width:774px;height:19px;background:#232932;"></div>
<svg class="a" style="left:0;top:438px" width="774" height="19" viewBox="0 0 774 19"><path d="M10.5 12.5 L12 3 Q12.3 1.8 13.5 1.8 H46 V12.5Z" fill="#3a4250"/><path d="M48 12.5 L49.5 3 Q49.8 1.8 51 1.8 H86 V12.5Z" fill="#2d343f"/><path d="M89 12.5 L90.5 3 Q90.8 1.8 92 1.8 H127 V12.5Z" fill="#2d343f"/><path d="M130.5 12.5 L132 3 Q132.3 1.8 133.5 1.8 H144.5 V12.5Z" fill="#2d343f"/></svg>
<div class="t" style="left:16.5px;top:440.6px;font-size:8.0px;color:#f4f5f7;font-weight:bold;font-style:normal;font-family:'Liberation Sans',sans-serif;letter-spacing:-0.03225806451612903px;transform:scaleX(0.93);transform-origin:left center;">Modell</div>
<div class="t" style="left:55.0px;top:440.6px;font-size:8.0px;color:#c3c7cd;font-weight:normal;font-style:normal;font-family:'Liberation Sans',sans-serif;letter-spacing:-0.24731182795698922px;transform:scaleX(0.93);transform-origin:left center;">Layout1</div>
<div class="t" style="left:95.0px;top:440.6px;font-size:8.0px;color:#c3c7cd;font-weight:normal;font-style:normal;font-family:'Liberation Sans',sans-serif;letter-spacing:0.07526881720430108px;transform:scaleX(0.93);transform-origin:left center;">Layout2</div>
<svg class="a" style="left:133.5px;top:441.5px;" width="8" height="8" viewBox="0 0 8 8"><path d="M4 0.5 V7.5 M0.5 4 H7.5" stroke="#b0b5bc" stroke-width="1.1"/></svg>
<div class="a" style="left:202px;top:440px;width:32px;height:16px;background:#2a313c;"></div>
<div class="a" style="left:236px;top:440px;width:34px;height:16px;background:#2a313c;"></div>
<div class="a" style="left:272px;top:440px;width:98px;height:16px;background:#2a313c;"></div>
<div class="a" style="left:374px;top:440px;width:58px;height:16px;background:#2a313c;"></div>
<div class="a" style="left:433px;top:440px;width:47px;height:16px;background:#2a313c;"></div>
<div class="a" style="left:481px;top:440px;width:44px;height:16px;background:#2a313c;"></div>
<div class="a" style="left:527px;top:440px;width:79px;height:16px;background:#2a313c;"></div>
<div class="a" style="left:608px;top:440px;width:32px;height:16px;background:#2a313c;"></div>
<div class="a" style="left:641px;top:440px;width:49px;height:16px;background:#2a313c;"></div>
<div class="a" style="left:692px;top:440px;width:16px;height:16px;background:#2a313c;"></div>
<div class="a" style="left:710px;top:440px;width:30px;height:16px;background:#2a313c;"></div>
<div class="a" style="left:742px;top:440px;width:30px;height:16px;background:#2a313c;"></div>
<div class="a" style="left:205px;top:441px;width:14px;height:13.5px;background:#4b73a3;"></div>
<div class="a" style="left:433.6px;top:441px;width:14px;height:13.5px;background:#4b73a3;"></div>
<div class="a" style="left:623px;top:441px;width:14px;height:13.5px;background:#4b73a3;"></div>
<div class="a" style="left:649px;top:441px;width:15px;height:13.5px;background:#4b73a3;"></div>
<svg class="a" style="left:206px;top:442px;" width="12" height="12" viewBox="0 0 12 12"><path d="M2 1 V10 H11" fill="none" stroke="#dde0e5" stroke-width="1.1"/><rect x="3" y="8" width="2" height="1" fill="#dde0e5"/></svg>
<svg class="a" style="left:222px;top:442px;" width="12" height="12" viewBox="0 0 12 12"><path d="M2 1 V10 H11 M2 10 L9 3" fill="none" stroke="#dde0e5" stroke-width="1.1"/></svg>
<svg class="a" style="left:238px;top:442px;" width="12" height="12" viewBox="0 0 12 12"><path d="M6 1 L11 10.5 H1Z" fill="none" stroke="#dde0e5" stroke-width="1.2"/><rect x="5.4" y="4" width="1.2" height="3.5" fill="#dde0e5"/><rect x="5.4" y="8.2" width="1.2" height="1.2" fill="#dde0e5"/></svg>
<div class="t" style="left:252.0px;top:443.5px;font-size:8.0px;color:#dde0e5;font-weight:normal;font-style:normal;font-family:'Liberation Sans',sans-serif;letter-spacing:0.02150537634408601px;transform:scaleX(0.93);transform-origin:left center;">1x</div>
<svg class="a" style="left:261.5px;top:445.5px;" width="5" height="4" viewBox="0 0 5 4"><path d="M0.5 1.00 L4.50 1.00 L2.50 3.20Z" fill="#dde0e5"/></svg>
<svg class="a" style="left:274px;top:442px;" width="12" height="12" viewBox="0 0 12 12"><circle cx="6" cy="6" r="4.8" fill="#dde0e5"/><path d="M3 3 Q5 5 4 8 Q6 9 5 11 M8 2 Q7 5 10 6" fill="none" stroke="#2a313c" stroke-width="1.1"/></svg>
<div class="t" style="left:286.0px;top:443.5px;font-size:8.0px;color:#dde0e5;font-weight:normal;font-style:normal;font-family:'Liberation Sans',sans-serif;letter-spacing:-0.17204301075268819px;transform:scaleX(0.93);transform-origin:left center;">CH1903Plus_1.LV95/01</div>
<svg class="a" style="left:364.5px;top:445.5px;" width="5" height="4" viewBox="0 0 5 4"><path d="M0.5 1.00 L4.50 1.00 L2.50 3.20Z" fill="#dde0e5"/></svg>
<svg class="a" style="left:376px;top:442px;" width="12" height="12" viewBox="0 0 12 12"><path d="M1 1 H6 L9 4 V11 H1Z" fill="none" stroke="#dde0e5" stroke-width="1.1"/><path d="M3 5 H7 M3 7 H7 M3 9 H7" stroke="#dde0e5" stroke-width="0.8"/></svg>
<div class="t" style="left:389.5px;top:443.5px;font-size:8.0px;color:#dde0e5;font-weight:normal;font-style:normal;font-family:'Liberation Sans',sans-serif;letter-spacing:-0.32258064516129037px;transform:scaleX(0.93);transform-origin:left center;">1 : 1341.32</div>
<svg class="a" style="left:425.5px;top:445.5px;" width="5" height="4" viewBox="0 0 5 4"><path d="M0.5 1.00 L4.50 1.00 L2.50 3.20Z" fill="#dde0e5"/></svg>
<svg class="a" style="left:435.5px;top:442px;" width="12" height="12" viewBox="0 0 12 12"><path d="M3 5 V3.5 Q3 1 5.5 1 Q8 1 8 3.5 V5" fill="none" stroke="#fff" stroke-width="1.2"/><rect x="2" y="5" width="7" height="6" fill="#fff"/></svg>
<div class="t" style="left:452.0px;top:443.5px;font-size:8.0px;color:#dde0e5;font-weight:normal;font-style:normal;font-family:'Liberation Sans',sans-serif;letter-spacing:-0.4086021505376344px;transform:scaleX(0.93);transform-origin:left center;">MODELL</div>
<svg class="a" style="left:487px;top:442px;" width="12" height="12" viewBox="0 0 12 12"><path d="M3 1 V11 M6 1 V11 M9 1 V11 M1 3 H11 M1 6 H11 M1 9 H11" stroke="#dde0e5" stroke-width="0.9"/></svg>
<svg class="a" style="left:502px;top:442px;" width="12" height="12" viewBox="0 0 12 12"><g fill="#dde0e5"><circle cx="2" cy="2" r="0.8"/><circle cx="6" cy="2" r="0.8"/><circle cx="10" cy="2" r="0.8"/><circle cx="2" cy="6" r="0.8"/><circle cx="6" cy="6" r="0.8"/><circle cx="10" cy="6" r="0.8"/><circle cx="2" cy="10" r="0.8"/><circle cx="6" cy="10" r="0.8"/><circle cx="10" cy="10" r="0.8"/></g></svg>
<svg class="a" style="left:516.5px;top:445.5px;" width="5" height="4" viewBox="0 0 5 4"><path d="M0.5 1.00 L4.50 1.00 L2.50 3.20Z" fill="#dde0e5"/></svg>
<svg class="a" style="left:528px;top:442px;" width="12" height="12" viewBox="0 0 12 12"><path d="M1 4 H4 M2.5 2.5 V5.5" stroke="#dde0e5" stroke-width="1"/><rect x="4" y="6" width="7" height="3" fill="#dde0e5"/></svg>
<svg class="a" style="left:544px;top:442px;" width="12" height="12" viewBox="0 0 12 12"><path d="M2 1 V10 H11" fill="none" stroke="#dde0e5" stroke-width="1.1"/></svg>
<svg class="a" style="left:559px;top:442px;" width="12" height="12" viewBox="0 0 12 12"><circle cx="5.5" cy="6" r="4.3" fill="none" stroke="#dde0e5" stroke-width="1.1"/><path d="M5.5 6 L11 1" stroke="#dde0e5" stroke-width="1"/></svg>
<svg class="a" style="left:574.5px;top:445.5px;" width="5" height="4" viewBox="0 0 5 4"><path d="M0.5 1.00 L4.50 1.00 L2.50 3.20Z" fill="#dde0e5"/></svg>
<svg class="a" style="left:585px;top:442px;" width="12" height="12" viewBox="0 0 12 12"><path d="M2 1 L10 11 M10 1 L6 6" stroke="#b06060" stroke-width="1.1"/><path d="M6 1 V11" stroke="#7a8088" stroke-width="1"/></svg>
<svg class="a" style="left:599.5px;top:445.5px;" width="5" height="4" viewBox="0 0 5 4"><path d="M0.5 1.00 L4.50 1.00 L2.50 3.20Z" fill="#dde0e5"/></svg>
<svg class="a" style="left:610px;top:442px;" width="12" height="12" viewBox="0 0 12 12"><path d="M1 10 H11 M1 10 L9 3" fill="none" stroke="#dde0e5" stroke-width="1.1"/></svg>
<svg class="a" style="left:624px;top:442px;" width="12" height="12" viewBox="0 0 12 12"><rect x="2" y="2" width="9" height="9" fill="none" stroke="#eef" stroke-width="1.1"/><rect x="0.5" y="0.5" width="3" height="3" fill="#eef"/></svg>
<svg class="a" style="left:639.5px;top:445.5px;" width="5" height="4" viewBox="0 0 5 4"><path d="M0.5 1.00 L4.50 1.00 L2.50 3.20Z" fill="#dde0e5"/></svg>
<svg class="a" style="left:650.5px;top:442px;" width="12" height="12" viewBox="0 0 12 12"><path d="M6 2 L2 11 M6 2 L10 11 M6 5 V10" stroke="#fff" stroke-width="1.6"/><circle cx="9" cy="2.5" r="1.8" fill="none" stroke="#fff" stroke-width="0.9"/></svg>
<svg class="a" style="left:666.5px;top:442px;" width="12" height="12" viewBox="0 0 12 12"><circle cx="6" cy="6" r="3.4" fill="none" stroke="#dde0e5" stroke-width="2.6" stroke-dasharray="1.7 1"/><circle cx="6" cy="6" r="2.6" fill="#dde0e5"/><circle cx="6" cy="6" r="1.1" fill="#2a313c"/></svg>
<svg class="a" style="left:683.0px;top:445.5px;" width="5" height="4" viewBox="0 0 5 4"><path d="M0.5 1.00 L4.50 1.00 L2.50 3.20Z" fill="#dde0e5"/></svg>
<svg class="a" style="left:693.5px;top:442px;" width="12" height="12" viewBox="0 0 12 12"><rect x="1" y="1" width="4.5" height="4.5" fill="none" stroke="#dde0e5" stroke-width="0.9"/><circle cx="9" cy="6" r="2.5" fill="none" stroke="#dde0e5" stroke-width="0.9"/><path d="M3 8 L5 11 H1Z" fill="none" stroke="#dde0e5" stroke-width="0.9"/></svg>
<svg class="a" style="left:712.5px;top:442px;" width="12" height="12" viewBox="0 0 12 12"><path d="M6 1 L11.5 11 H0.5Z" fill="#eceef0"/><rect x="5.3" y="4" width="1.4" height="4" fill="#2a313c"/><rect x="5.3" y="8.8" width="1.4" height="1.3" fill="#2a313c"/></svg>
<svg class="a" style="left:726.5px;top:442px;" width="12" height="12" viewBox="0 0 12 12"><rect x="3" y="1" width="2" height="4" fill="#4a90d0"/><rect x="0.5" y="4" width="7" height="3" fill="#4a90d0"/><rect x="1" y="7" width="6" height="3" fill="#f0c040"/><path d="M6 9 L8 11 L11.5 6.5" fill="none" stroke="#3ab04a" stroke-width="1.5"/></svg>
<svg class="a" style="left:742.5px;top:442px;" width="12" height="12" viewBox="0 0 12 12"><rect x="1" y="2" width="10" height="8" fill="none" stroke="#9aa0a8" stroke-width="1"/><rect x="2.5" y="6" width="2" height="2" fill="#dde0e5"/><rect x="7.5" y="3.5" width="2" height="2" fill="#dde0e5"/></svg>
<svg class="a" style="left:757.5px;top:442px;" width="12" height="12" viewBox="0 0 12 12"><path d="M0.5 2 H11.5 M0.5 6 H11.5 M0.5 10 H11.5" stroke="#dde0e5" stroke-width="1.3"/></svg>
</div>
<svg class="a" style="left:0;top:0" width="1024" height="568" viewBox="0 0 1024 568"><defs><clipPath id="cp"><rect x="145" y="212" width="743" height="234"/></clipPath></defs><g clip-path="url(#cp)" fill="none" stroke-linejoin="round" stroke-linecap="round">
<path d="M223.8 223.5 L224.8 279.0 L225.8 329.0" stroke="#e4302a" stroke-width="2.4"/>
<path d="M145.0 219.3 L165.8 217.9 L211.4 213.5 L216.6 216.2 L220.8 223.5 L221.8 279.5 L223.4 304.4 L221.8 329.0" stroke="#2d2b8e" stroke-width="2.7"/>
<path d="M219.5 226.0 L219.5 329.0" stroke="#e4302a" stroke-width="1.0"/>
<path d="M176.1 223.5 L211.4 219.7" stroke="#e4302a" stroke-width="1.4"/>
<path d="M222.9 222.4 L239.5 217.6 L319.4 216.2 L320.5 212.7" stroke="#2d2b8e" stroke-width="1.2"/>
<path d="M239.5 217.6 L241.0 222.0" stroke="#2d2b8e" stroke-width="1"/>
<path d="M280.0 212.0 L279.0 220.0" stroke="#e4302a" stroke-width="1"/>
<path d="M222.9 245.3 L240.5 244.2 L262.3 249.0" stroke="#2d2b8e" stroke-width="1.2"/>
<path d="M225.0 242.5 L240.5 242.6" stroke="#e4302a" stroke-width="1.2"/>
<path d="M215.6 240.0 L215.6 255.6 L220.0 255.6" stroke="#2d2b8e" stroke-width="1"/>
<path d="M225.0 262.9 L239.5 262.9" stroke="#e4302a" stroke-width="1.2"/>
<path d="M225.5 251.0 L225.5 268.0" stroke="#e4302a" stroke-width="2.2"/>
<path d="M225.0 272.3 L238.4 273.3" stroke="#2d2b8e" stroke-width="1.1"/>
<path d="M225.0 276.0 L236.4 276.4" stroke="#e4302a" stroke-width="1.1"/>
<path d="M213.5 281.6 L221.0 281.0" stroke="#2d2b8e" stroke-width="1"/>
<path d="M222.0 285.8 L237.4 285.8 L237.4 289.9 L225.0 290.0" stroke="#2d2b8e" stroke-width="1.1"/>
<path d="M237.4 290.0 L248.8 285.3 L248.8 295.1" stroke="#2d2b8e" stroke-width="1.1"/>
<path d="M225.0 293.0 L234.3 291.0" stroke="#e4302a" stroke-width="1.1"/>
<path d="M225.0 306.5 L234.3 305.5 L246.7 302.4" stroke="#2d2b8e" stroke-width="1.1"/>
<path d="M234.3 305.5 L235.3 329.0" stroke="#2d2b8e" stroke-width="1.1"/>
<path d="M225.0 323.0 L234.3 318.0" stroke="#e4302a" stroke-width="1.1"/>
<path d="M145.0 319.5 L186.5 329.5" stroke="#e4302a" stroke-width="2.4"/>
<path d="M145.0 324.0 L180.0 330.0" stroke="#e4302a" stroke-width="2.4"/>
<path d="M173.0 312.7 L181.3 327.3" stroke="#2d2b8e" stroke-width="1.1"/>
<path d="M185.5 320.0 L183.4 329.0" stroke="#2d2b8e" stroke-width="1.1"/>
<path d="M296.6 292.0 L296.6 312.7 L320.5 312.7 L323.6 308.6" stroke="#2d2b8e" stroke-width="1.1"/>
<path d="M324.6 251.5 L329.8 267.0 L342.0 269.5" stroke="#2d2b8e" stroke-width="1.1"/>
<path d="M329.8 267.0 L327.7 277.4" stroke="#2d2b8e" stroke-width="1.1"/>
<path d="M302.8 326.2 L307.0 324.2" stroke="#2d2b8e" stroke-width="1.1"/>
<path d="M274.8 321.0 L272.0 329.0" stroke="#e4302a" stroke-width="1.1"/>
<path d="M145.0 213.0 L158.5 213.0" stroke="#e4302a" stroke-width="1.2"/>
<path d="M150.2 215.0 L150.2 221.0" stroke="#2d2b8e" stroke-width="1"/>
<path d="M383.0 214.1 L323.6 308.6 L316.0 322.0" stroke="#e4302a" stroke-width="1.5"/>
<path d="M367.4 215.0 L377.8 213.0" stroke="#e4302a" stroke-width="2.5"/>
<path d="M330.0 267.0 L346.6 269.1" stroke="#2d2b8e" stroke-width="1.1"/>
<path d="M336.2 291.0 L347.6 303.4 L355.0 312.7" stroke="#2d2b8e" stroke-width="1.1"/>
<path d="M341.4 294.0 L353.9 288.9" stroke="#2d2b8e" stroke-width="1.1"/>
<path d="M402.7 229.7 L402.7 273.3 L405.8 291.0 L416.2 306.5" stroke="#2d2b8e" stroke-width="1.3"/>
<path d="M402.7 240.0 L402.7 275.0" stroke="#2d2b8e" stroke-width="2.4"/>
<path d="M402.7 229.7 L416.2 222.4" stroke="#2d2b8e" stroke-width="1.1"/>
<path d="M420.3 218.3 L427.6 218.3" stroke="#2d2b8e" stroke-width="1.1"/>
<path d="M420.3 218.3 L422.4 277.4 L412.0 282.6" stroke="#2d2b8e" stroke-width="1.1"/>
<path d="M390.2 237.0 L401.6 242.1" stroke="#2d2b8e" stroke-width="1.1"/>
<path d="M391.3 259.8 L417.2 254.6" stroke="#2d2b8e" stroke-width="1.1"/>
<path d="M404.8 282.6 L424.5 284.7" stroke="#2d2b8e" stroke-width="1.1"/>
<path d="M392.3 231.8 L392.3 256.7 L399.6 273.3 L404.8 283.7 L417.2 302.4 L427.6 309.6 L454.6 321.0 L463.0 324.2" stroke="#e4302a" stroke-width="1.2"/>
<path d="M375.7 274.3 L381.9 278.5" stroke="#e4302a" stroke-width="1.1"/>
<path d="M381.0 278.0 L383.0 284.0" stroke="#2d2b8e" stroke-width="1"/>
<path d="M393.3 284.7 L398.5 306.5 L401.6 329.0" stroke="#e4302a" stroke-width="1.2"/>
<path d="M397.5 283.7 L402.7 319.0 L412.0 321.0 L427.6 312.7 L432.8 308.6" stroke="#2d2b8e" stroke-width="1.2"/>
<path d="M404.8 289.9 L416.2 306.5" stroke="#2d2b8e" stroke-width="3.0"/>
<path d="M415.1 307.6 L438.0 306.5 L466.0 305.5 L473.3 329.0" stroke="#2d2b8e" stroke-width="1.8"/>
<path d="M407.9 312.7 L415.1 308.6" stroke="#2d2b8e" stroke-width="2.0"/>
<path d="M413.0 298.2 L425.5 295.1" stroke="#e4302a" stroke-width="2.4"/>
<path d="M400.6 301.3 L413.0 298.0" stroke="#e4302a" stroke-width="1.1"/>
<path d="M402.7 307.6 L412.0 307.6" stroke="#2d2b8e" stroke-width="1.1"/>
<path d="M385.0 329.0 L399.6 325.2" stroke="#2d2b8e" stroke-width="1.1"/>
<path d="M493.0 211.0 L489.9 267.0 L486.8 302.4" stroke="#e4302a" stroke-width="1.4"/>
<path d="M491.0 240.0 L489.5 270.0" stroke="#e4302a" stroke-width="2.4"/>
<path d="M494.0 218.3 L502.3 219.3 L500.3 260.8 L491.0 260.8" stroke="#2d2b8e" stroke-width="1.1"/>
<path d="M505.5 221.4 L503.4 261.9" stroke="#2d2b8e" stroke-width="1.1"/>
<path d="M467.0 224.5 L491.0 225.1" stroke="#2d2b8e" stroke-width="1.1"/>
<path d="M475.0 224.8 L485.0 225.0" stroke="#2d2b8e" stroke-width="2.2"/>
<path d="M462.9 233.8 L488.8 259.8" stroke="#2d2b8e" stroke-width="1.2"/>
<path d="M462.9 243.2 L473.3 244.2" stroke="#2d2b8e" stroke-width="1.1"/>
<path d="M479.5 240.0 L489.9 242.1" stroke="#e4302a" stroke-width="1.1"/>
<path d="M460.8 277.4 L487.8 277.0" stroke="#e4302a" stroke-width="1.2"/>
<path d="M467.0 282.0 L463.0 286.0" stroke="#2d2b8e" stroke-width="1"/>
<path d="M489.9 281.6 L506.5 281.6 L506.5 285.8" stroke="#e4302a" stroke-width="1.1"/>
<path d="M475.3 298.2 L498.2 293.0 L500.3 305.5 L520.0 312.7" stroke="#2d2b8e" stroke-width="1.1"/>
<path d="M442.1 329.0 L487.8 306.5" stroke="#e4302a" stroke-width="2.6"/>
<path d="M452.0 329.0 L489.0 309.0" stroke="#e4302a" stroke-width="2.0"/>
<path d="M462.9 329.0 L487.8 306.5" stroke="#e4302a" stroke-width="2.0"/>
<path d="M475.3 319.0 L520.0 321.0" stroke="#e4302a" stroke-width="1.6"/>
<path d="M475.3 323.0 L520.0 326.0" stroke="#e4302a" stroke-width="1.6"/>
<path d="M475.3 329.0 L487.8 322.1" stroke="#2d2b8e" stroke-width="1.1"/>
<path d="M456.7 217.2 L460.8 213.0" stroke="#2d2b8e" stroke-width="1.1"/>
<path d="M556.0 290.0 L573.0 278.0 L598.0 262.0 L625.0 248.0" stroke="#e4302a" stroke-width="1.8"/>
<path d="M549.3 306.5 L565.9 291.0" stroke="#2d2b8e" stroke-width="2.2"/>
<path d="M606.4 260.8 L625.0 251.5 L635.4 249.4" stroke="#2d2b8e" stroke-width="1.6"/>
<path d="M650.0 244.2 L664.5 241.1 L691.5 237.6 L705.0 238.0" stroke="#2d2b8e" stroke-width="2.6"/>
<path d="M609.5 211.0 L625.0 247.3" stroke="#e4302a" stroke-width="1.6"/>
<path d="M608.4 211.0 L613.6 223.5" stroke="#2d2b8e" stroke-width="1.4"/>
<path d="M616.7 213.0 L629.2 242.1" stroke="#e4302a" stroke-width="1.1"/>
<path d="M606.4 284.7 L639.6 281.6 L660.3 277.4 L683.2 277.0" stroke="#2d2b8e" stroke-width="1.2"/>
<path d="M640.0 281.0 L660.3 277.4 L683.2 277.0" stroke="#2d2b8e" stroke-width="2.6"/>
<path d="M606.4 285.8 L639.6 282.6" stroke="#e4302a" stroke-width="1.1"/>
<path d="M643.7 283.7 L670.7 285.8 L660.3 279.5" stroke="#e4302a" stroke-width="1.1"/>
<path d="M683.0 277.0 L705.0 282.6" stroke="#e4302a" stroke-width="1.2"/>
<path d="M659.3 270.0 L659.3 290.0" stroke="#2d2b8e" stroke-width="1.1"/>
<path d="M676.0 270.0 L676.0 290.0" stroke="#2d2b8e" stroke-width="1.1"/>
<path d="M692.5 270.0 L692.5 290.0" stroke="#2d2b8e" stroke-width="1.1"/>
<path d="M637.5 285.0 L636.5 300.0" stroke="#e4302a" stroke-width="1"/>
<path d="M682.0 280.0 L681.0 290.0" stroke="#e4302a" stroke-width="1"/>
<path d="M604.3 324.2 L639.6 326.2 L705.0 329.0" stroke="#e4302a" stroke-width="1.3"/>
<path d="M541.0 312.7 L541.0 329.0" stroke="#e4302a" stroke-width="1.6"/>
<path d="M548.2 308.6 L551.3 319.0" stroke="#2d2b8e" stroke-width="1"/>
<path d="M515.0 312.7 L519.0 314.0" stroke="#2d2b8e" stroke-width="1"/>
<path d="M651.0 243.0 L656.2 249.4 L647.9 251.5" stroke="#2d2b8e" stroke-width="1"/>
<path d="M639.6 247.3 L642.7 253.6" stroke="#2d2b8e" stroke-width="1"/>
<path d="M677.0 240.0 L677.0 248.0" stroke="#2d2b8e" stroke-width="1.4"/>
<path d="M695.6 238.0 L693.6 248.0" stroke="#2d2b8e" stroke-width="1.4"/>
<path d="M583.5 250.0 L589.8 270.0" stroke="#2d2b8e" stroke-width="1"/>
<path d="M577.3 279.5 L579.4 284.7" stroke="#2d2b8e" stroke-width="1"/>
<path d="M609.5 246.3 L614.7 249.4" stroke="#2d2b8e" stroke-width="1"/>
<path d="M569.0 262.9 L575.2 269.1" stroke="#e4302a" stroke-width="1.1"/>
<path d="M690.5 288.9 L697.7 283.7" stroke="#2d2b8e" stroke-width="1"/>
<path d="M650.0 331.0 L655.0 322.0" stroke="#e4302a" stroke-width="1"/>
<path d="M738.4 213.0 L769.6 256.7" stroke="#e4302a" stroke-width="1.2"/>
<path d="M732.2 219.3 L731.1 242.1" stroke="#e4302a" stroke-width="1.6"/>
<path d="M700.0 235.9 L730.1 242.1 L768.5 256.7" stroke="#e4302a" stroke-width="2.2"/>
<path d="M712.5 240.0 L760.2 254.6" stroke="#2d2b8e" stroke-width="2.8"/>
<path d="M768.5 256.7 L766.4 273.3 L757.1 300.3 L748.8 329.0" stroke="#e4302a" stroke-width="2.6"/>
<path d="M766.4 270.0 L760.2 289.9" stroke="#2d2b8e" stroke-width="2.0"/>
<path d="M770.0 257.0 L790.3 261.9" stroke="#2d2b8e" stroke-width="1.6"/>
<path d="M700.0 283.7 L720.8 287.8 L756.1 301.3" stroke="#e4302a" stroke-width="2.0"/>
<path d="M709.3 283.7 L724.9 289.9" stroke="#2d2b8e" stroke-width="2.6"/>
<path d="M703.1 301.3 L710.4 296.1 L716.6 292.0" stroke="#2d2b8e" stroke-width="1.1"/>
<path d="M749.8 299.2 L758.1 302.4" stroke="#2d2b8e" stroke-width="2.0"/>
<path d="M702.0 217.2 L712.5 219.3" stroke="#e4302a" stroke-width="1.1"/>
<path d="M712.5 224.5 L720.8 227.6 L722.8 238.0" stroke="#e4302a" stroke-width="1.1"/>
<path d="M710.4 242.1 L713.5 251.5" stroke="#2d2b8e" stroke-width="1.1"/>
<path d="M735.3 246.3 L732.2 255.6" stroke="#2d2b8e" stroke-width="1.1"/>
<path d="M754.0 260.8 L760.2 257.7" stroke="#2d2b8e" stroke-width="1.1"/>
<path d="M710.4 245.3 L708.3 249.4" stroke="#e4302a" stroke-width="1.1"/>
<path d="M749.8 255.6 L747.8 264.0" stroke="#e4302a" stroke-width="1.1"/>
<path d="M706.2 272.3 L704.2 279.5" stroke="#2d2b8e" stroke-width="1.1"/>
<path d="M740.5 289.9 L737.4 296.1" stroke="#2d2b8e" stroke-width="1.1"/>
<path d="M729.0 294.0 L726.0 297.2" stroke="#2d2b8e" stroke-width="1.1"/>
<path d="M184.5 327.0 L217.7 347.5 L250.0 366.0" stroke="#e4302a" stroke-width="2.0"/>
<path d="M255.0 375.0 L302.0 380.0" stroke="#e4302a" stroke-width="2.2"/>
<path d="M229.5 382.0 L228.5 420.0 L227.0 446.0" stroke="#e4302a" stroke-width="2.2"/>
<path d="M220.8 328.0 L217.7 352.9 L223.9 363.3 L228.5 380.7 L227.8 385.0 L226.5 420.0 L225.5 446.0" stroke="#2d2b8e" stroke-width="2.5"/>
<path d="M226.0 328.0 L227.0 350.8" stroke="#e4302a" stroke-width="2.4"/>
<path d="M227.0 332.2 L231.0 330.0 L234.3 326.0" stroke="#2d2b8e" stroke-width="1.1"/>
<path d="M232.2 337.3 L253.0 336.7" stroke="#e4302a" stroke-width="1.1"/>
<path d="M227.0 354.0 L240.5 354.0 L250.9 364.3 L294.5 369.5" stroke="#2d2b8e" stroke-width="1.2"/>
<path d="M255.0 366.0 L275.0 368.0" stroke="#2d2b8e" stroke-width="2.4"/>
<path d="M294.5 364.3 L317.3 356.0 L335.0 348.8" stroke="#2d2b8e" stroke-width="1.2"/>
<path d="M294.5 364.0 L298.7 374.7" stroke="#2d2b8e" stroke-width="1.1"/>
<path d="M271.7 328.0 L268.5 347.7 L266.5 359.1" stroke="#e4302a" stroke-width="1.1"/>
<path d="M278.9 357.0 L274.8 382.0" stroke="#e4302a" stroke-width="1.1"/>
<path d="M316.3 345.6 L325.6 367.5" stroke="#e4302a" stroke-width="1.1"/>
<path d="M229.0 384.7 L239.2 382.7" stroke="#e4302a" stroke-width="1.0"/>
<path d="M228.0 406.0 L241.9 394.0" stroke="#e4302a" stroke-width="1.0"/>
<path d="M228.0 408.8 L236.0 404.5 L244.5 402.8" stroke="#e4302a" stroke-width="1.6"/>
<path d="M217.1 414.2 L228.0 410.0" stroke="#e4302a" stroke-width="1.0"/>
<path d="M219.1 423.5 L225.8 408.8" stroke="#e4302a" stroke-width="1.0"/>
<path d="M228.0 432.2 L237.8 432.2 L241.9 424.9 L241.2 423.5" stroke="#2d2b8e" stroke-width="1.2"/>
<path d="M211.0 443.6 L216.4 440.3 L217.8 433.0" stroke="#2d2b8e" stroke-width="1.2"/>
<path d="M216.4 440.3 L225.0 437.0" stroke="#2d2b8e" stroke-width="1.2"/>
<path d="M169.9 336.7 L177.2 336.7" stroke="#2d2b8e" stroke-width="1.1"/>
<path d="M294.5 333.2 L302.8 328.0" stroke="#2d2b8e" stroke-width="1.1"/>
<path d="M334.2 365.4 L348.7 362.3" stroke="#e4302a" stroke-width="2.8"/>
<path d="M417.2 337.3 L429.7 334.2" stroke="#e4302a" stroke-width="2.8"/>
<path d="M350.8 367.5 L364.3 364.3" stroke="#2d2b8e" stroke-width="2.4"/>
<path d="M330.0 350.8 L346.6 345.6 L375.7 337.3 L398.5 329.0" stroke="#2d2b8e" stroke-width="1.1"/>
<path d="M346.6 345.0 L347.5 360.0" stroke="#2d2b8e" stroke-width="1.1"/>
<path d="M355.0 337.3 L363.2 356.0" stroke="#2d2b8e" stroke-width="1.1"/>
<path d="M372.6 337.3 L375.7 350.8" stroke="#2d2b8e" stroke-width="1.1"/>
<path d="M367.4 366.4 L379.8 365.4 L392.3 358.1" stroke="#2d2b8e" stroke-width="1.1"/>
<path d="M390.2 351.9 L421.4 343.6 L462.9 332.2 L473.3 332.2" stroke="#2d2b8e" stroke-width="1.1"/>
<path d="M441.1 345.6 L462.9 339.4 L475.3 337.3" stroke="#2d2b8e" stroke-width="1.1"/>
<path d="M473.3 332.2 L479.5 350.8 L484.7 363.3 L482.6 371.6 L494.0 420.4" stroke="#2d2b8e" stroke-width="2.6"/>
<path d="M494.0 420.4 L487.8 427.7 L483.7 429.7" stroke="#2d2b8e" stroke-width="2.6"/>
<path d="M494.0 420.4 L506.5 425.6 L512.7 431.8 L515.8 446.0" stroke="#2d2b8e" stroke-width="2.6"/>
<path d="M398.5 441.2 L438.0 436.0 L482.6 429.7" stroke="#2d2b8e" stroke-width="2.4"/>
<path d="M394.4 425.6 L398.5 441.2" stroke="#2d2b8e" stroke-width="1.6"/>
<path d="M390.2 425.6 L396.4 441.2 L403.7 440.1" stroke="#e4302a" stroke-width="1.4"/>
<path d="M446.3 436.0 L460.8 434.9" stroke="#e4302a" stroke-width="2.4"/>
<path d="M475.3 329.0 L487.8 340.5 L502.3 375.8 L510.6 400.7 L516.9 431.8 L520.0 446.0" stroke="#e4302a" stroke-width="1.3"/>
<path d="M484.7 376.8 L504.4 386.1" stroke="#e4302a" stroke-width="1.0"/>
<path d="M487.8 429.7 L510.6 433.9" stroke="#e4302a" stroke-width="1.3"/>
<path d="M337.3 371.6 L338.3 377.8" stroke="#e4302a" stroke-width="1"/>
<path d="M367.4 364.3 L368.4 369.5" stroke="#e4302a" stroke-width="1"/>
<path d="M402.7 351.9 L406.8 364.3" stroke="#e4302a" stroke-width="1"/>
<path d="M402.7 328.0 L405.8 336.3" stroke="#e4302a" stroke-width="1"/>
<path d="M391.3 350.8 L395.4 359.1" stroke="#e4302a" stroke-width="1"/>
<path d="M455.6 334.2 L457.7 339.4" stroke="#e4302a" stroke-width="1"/>
<path d="M419.3 345.6 L421.4 352.9" stroke="#2d2b8e" stroke-width="1"/>
<path d="M401.6 354.0 L400.6 359.1" stroke="#2d2b8e" stroke-width="1"/>
<path d="M541.0 328.0 L544.1 359.1 L548.2 388.2 L559.6 419.4 L557.6 446.0" stroke="#e4302a" stroke-width="2.6"/>
<path d="M537.8 336.3 L537.8 377.8 L554.5 436.0 L556.5 446.0" stroke="#e4302a" stroke-width="1.2"/>
<path d="M528.5 347.7 L528.5 375.8 L539.9 419.4 L549.3 446.0" stroke="#2d2b8e" stroke-width="1.2"/>
<path d="M528.5 375.8 L527.5 384.0 L535.8 404.8" stroke="#2d2b8e" stroke-width="1.1"/>
<path d="M528.5 360.8 L550.3 360.8" stroke="#2d2b8e" stroke-width="1.1"/>
<path d="M524.3 377.8 L551.3 377.8" stroke="#2d2b8e" stroke-width="1.1"/>
<path d="M538.9 349.8 L551.3 349.8" stroke="#e4302a" stroke-width="1.1"/>
<path d="M523.3 372.6 L537.8 372.6" stroke="#e4302a" stroke-width="1.1"/>
<path d="M542.0 365.4 L551.3 365.4" stroke="#e4302a" stroke-width="1.1"/>
<path d="M521.2 393.4 L527.5 393.4" stroke="#e4302a" stroke-width="1.1"/>
<path d="M515.0 413.1 L519.2 436.0" stroke="#2d2b8e" stroke-width="1.1"/>
<path d="M515.0 415.2 L521.2 446.0" stroke="#e4302a" stroke-width="1.3"/>
<path d="M559.6 446.0 L566.9 442.2" stroke="#2d2b8e" stroke-width="1.1"/>
<path d="M586.6 347.7 L591.8 373.7 L599.1 413.1 L606.4 418.3" stroke="#e4302a" stroke-width="1.4"/>
<path d="M591.0 370.0 L596.0 395.0" stroke="#e4302a" stroke-width="2.0"/>
<path d="M579.4 359.1 L586.6 359.0" stroke="#e4302a" stroke-width="1"/>
<path d="M581.4 373.7 L591.8 373.7" stroke="#e4302a" stroke-width="1"/>
<path d="M586.6 402.8 L606.4 394.4" stroke="#e4302a" stroke-width="1"/>
<path d="M585.6 359.1 L581.4 373.7" stroke="#2d2b8e" stroke-width="1"/>
<path d="M606.4 417.3 L618.8 421.4 L647.9 426.6 L680.1 436.0 L695.6 427.7 L705.0 419.4" stroke="#e4302a" stroke-width="1.6"/>
<path d="M633.4 423.5 L646.9 426.6" stroke="#e4302a" stroke-width="2.6"/>
<path d="M600.1 419.4 L592.9 431.8" stroke="#e4302a" stroke-width="1.1"/>
<path d="M627.1 411.0 L629.2 423.5" stroke="#e4302a" stroke-width="1.1"/>
<path d="M663.5 411.0 L667.6 421.4" stroke="#2d2b8e" stroke-width="1.1"/>
<path d="M674.9 425.6 L679.0 433.9" stroke="#2d2b8e" stroke-width="1.1"/>
<path d="M661.4 440.1 L664.5 436.0" stroke="#2d2b8e" stroke-width="1.1"/>
<path d="M612.6 426.6 L616.7 431.8 L612.6 431.8" stroke="#2d2b8e" stroke-width="1.1"/>
<path d="M624.0 330.1 L639.6 328.0" stroke="#e4302a" stroke-width="1.1"/>
<path d="M639.6 328.0 L666.6 331.1 L693.6 340.5 L705.0 348.8" stroke="#e4302a" stroke-width="2.0"/>
<path d="M705.0 359.1 L689.4 382.0" stroke="#e4302a" stroke-width="2.2"/>
<path d="M620.9 367.5 L634.4 375.8 L672.8 379.5 L689.4 382.0" stroke="#e4302a" stroke-width="1.6"/>
<path d="M634.4 375.8 L628.2 381.0" stroke="#e4302a" stroke-width="1"/>
<path d="M656.2 377.8 L670.7 378.9" stroke="#e4302a" stroke-width="2.4"/>
<path d="M660.3 328.0 L658.3 338.4" stroke="#e4302a" stroke-width="1"/>
<path d="M683.2 328.0 L691.5 334.2" stroke="#e4302a" stroke-width="1"/>
<path d="M699.8 328.0 L695.6 336.3" stroke="#e4302a" stroke-width="1"/>
<path d="M648.9 371.6 L646.9 375.8" stroke="#e4302a" stroke-width="1"/>
<path d="M748.8 328.0 L736.3 377.8" stroke="#e4302a" stroke-width="2.0"/>
<path d="M700.0 345.6 L710.4 348.8 L736.3 377.8 L750.9 394.4" stroke="#e4302a" stroke-width="2.4"/>
<path d="M710.4 348.8 L700.0 365.4" stroke="#e4302a" stroke-width="1.6"/>
<path d="M710.4 348.8 L737.4 362.3" stroke="#e4302a" stroke-width="1.1"/>
<path d="M736.3 377.8 L724.9 392.4 L712.5 415.2 L700.0 425.6" stroke="#e4302a" stroke-width="2.2"/>
<path d="M750.9 394.4 L740.5 415.2 L727.0 443.2" stroke="#e4302a" stroke-width="1.6"/>
<path d="M753.0 394.4 L762.3 401.7" stroke="#2d2b8e" stroke-width="2.8"/>
<path d="M720.8 358.1 L726.0 359.1" stroke="#2d2b8e" stroke-width="2.2"/>
<path d="M708.3 377.8 L727.0 390.3" stroke="#e4302a" stroke-width="1.1"/>
<path d="M223.9 226.8L228.2 225.3 M224.1 240.4L228.3 238.9 M224.3 251.4L227.6 251.2 M224.5 260.3L221.2 260.3 M224.7 274.9L230.0 274.4 M225.0 289.7L230.0 288.3 M225.2 300.1L230.5 300.2 M225.5 312.5L230.8 312.9 M225.7 322.5L230.9 322.8 M180.2 223.1L179.3 227.8 M190.0 222.0L190.2 215.8 M198.9 221.0L198.2 226.1 M228.2 242.5L228.0 239.1 M227.6 262.9L226.1 267.3 M235.2 262.9L235.7 267.2 M225.5 256.2L231.6 258.1 M225.5 267.0L228.7 267.4 M231.0 276.2L231.2 280.3 M227.0 292.6L227.6 296.9 M227.5 321.6L229.7 324.4 M150.3 320.8L150.9 317.2 M159.3 322.9L162.3 317.4 M168.3 325.1L165.8 331.6 M178.0 327.5L178.1 323.9 M147.9 324.5L148.2 330.8 M157.0 326.1L157.4 321.4 M168.4 328.0L169.4 322.3 M273.2 325.4L277.2 328.2 M149.7 213.0L150.1 217.6 M381.1 217.1L384.1 218.3 M376.7 224.2L371.5 222.7 M370.5 233.9L376.0 238.0 M366.5 240.3L371.7 242.0 M361.7 248.0L357.1 245.2 M357.5 254.7L351.5 251.1 M351.7 263.9L354.4 266.3 M344.8 274.8L338.8 272.8 M341.0 280.9L338.0 278.9 M337.2 287.0L332.4 282.0 M330.5 297.7L327.1 293.9 M325.2 306.0L329.0 309.5 M320.4 314.3L324.5 317.9 M370.1 214.5L370.0 208.2 M392.3 235.9L386.7 233.9 M392.3 249.2L388.3 248.6 M395.2 263.2L389.1 264.8 M399.1 272.2L396.6 274.3 M403.9 281.9L400.3 283.3 M411.5 293.8L415.9 291.6 M419.7 304.2L421.9 298.2 M428.1 309.8L429.0 305.0 M440.4 315.0L438.2 317.5 M452.1 320.0L449.1 323.5 M377.9 275.8L379.8 273.3 M394.4 289.2L389.1 291.1 M397.0 300.3L400.1 300.2 M399.4 312.9L404.4 313.7 M400.8 323.2L406.7 321.1 M416.1 297.4L413.9 291.8 M405.8 299.9L403.4 293.7 M492.8 215.3L486.8 213.3 M492.3 223.4L497.2 221.9 M491.7 233.9L497.0 235.2 M491.3 242.1L496.1 243.1 M490.6 253.5L484.9 253.0 M490.0 264.3L496.4 262.7 M489.4 272.8L495.5 273.4 M488.4 284.3L493.1 285.1 M487.4 295.3L493.2 295.6 M490.8 243.9L496.3 245.7 M490.1 258.4L483.7 256.3 M489.6 267.0L486.2 267.8 M481.7 240.5L481.7 235.7 M463.3 277.4L463.9 270.6 M473.2 277.2L471.2 283.4 M482.0 277.1L481.9 272.5 M495.2 281.6L497.2 276.1 M505.5 281.6L505.9 285.4 M444.0 328.1L447.4 331.4 M452.6 323.8L456.1 327.5 M466.0 317.2L461.4 312.1 M474.2 313.2L470.0 308.1 M485.9 307.5L488.0 313.5 M455.2 327.3L459.3 331.4 M461.8 323.7L458.4 320.4 M474.5 316.8L470.1 312.4 M486.7 310.2L483.9 307.3 M467.3 325.0L472.6 329.2 M473.3 319.6L470.6 313.4 M480.0 313.5L477.1 311.0 M487.0 307.2L484.3 304.1 M478.7 319.2L476.8 312.4 M485.8 319.5L485.2 314.5 M496.4 319.9L496.0 325.6 M510.5 320.6L508.3 325.9 M480.6 323.4L480.4 318.7 M488.0 323.9L488.5 320.8 M502.0 324.8L502.9 328.4 M515.7 325.7L514.7 331.0 M558.2 288.4L561.6 291.8 M570.2 279.9L571.4 283.8 M578.1 274.7L580.5 277.6 M584.6 270.6L588.1 274.1 M593.9 264.6L592.8 261.5 M600.9 260.5L598.3 256.8 M611.6 254.9L609.2 250.2 M623.1 249.0L625.1 254.7 M610.7 213.9L613.9 213.4 M616.3 226.9L610.4 228.0 M619.5 234.3L625.4 232.2 M618.6 217.3L621.1 215.1 M623.3 228.5L627.4 226.5 M626.3 235.3L631.6 233.7 M608.4 285.6L607.8 279.6 M619.6 284.5L619.0 278.6 M633.0 283.2L632.7 287.2 M648.3 284.1L648.3 289.0 M659.1 284.9L658.1 290.9 M670.3 285.5L668.0 290.5 M687.6 278.2L687.4 275.1 M696.5 280.4L698.6 275.1 M608.4 324.4L607.2 329.1 M623.3 325.3L622.3 321.1 M634.0 325.9L632.7 330.5 M648.8 326.6L649.0 333.6 M663.1 327.2L662.3 324.0 M676.1 327.8L677.5 334.4 M689.6 328.3L688.4 334.8 M698.5 328.7L699.3 333.2 M541.0 317.4L536.9 318.5 M541.0 327.2L537.5 327.6 M571.4 265.3L568.3 266.9 M741.7 217.6L739.2 220.8 M747.5 225.8L751.0 223.0 M752.9 233.3L755.3 230.0 M760.0 243.3L762.9 240.5 M766.5 252.3L772.0 249.8 M732.1 221.4L725.9 219.1 M731.5 232.8L734.7 233.5 M704.9 236.9L702.6 241.3 M716.1 239.2L716.5 234.3 M725.3 241.1L725.2 245.7 M735.6 244.2L734.1 247.3 M742.7 246.9L741.1 251.8 M751.8 250.3L750.0 254.7 M760.1 253.5L760.5 249.2 M768.5 256.7L767.5 262.9 M767.8 262.1L763.2 261.5 M766.6 272.1L760.6 271.3 M763.0 283.1L759.7 281.9 M759.1 294.5L761.9 296.4 M756.0 304.1L751.3 303.4 M752.3 317.0L755.7 317.8 M705.1 284.7L704.8 287.7 M719.3 287.5L719.1 294.4 M726.7 290.1L729.0 287.3 M734.0 292.9L732.3 295.7 M740.6 295.4L743.0 292.3 M751.9 299.7L748.9 305.9 M705.7 217.9L705.9 214.5 M715.1 225.5L713.5 229.0 M721.0 228.6L714.4 230.9 M722.8 237.9L727.3 236.1 M748.7 260.3L745.5 260.2 M188.4 329.4L190.9 326.3 M200.7 337.0L203.8 333.1 M211.5 343.7L209.6 349.1 M223.0 350.5L225.9 348.0 M231.2 355.2L232.5 351.5 M242.6 361.7L240.6 364.6 M260.6 375.6L259.5 380.1 M275.1 377.1L273.7 370.6 M282.2 377.9L283.4 373.4 M290.6 378.8L288.2 384.9 M229.3 388.0L233.6 387.2 M229.0 402.5L225.9 402.0 M228.7 412.5L221.8 412.6 M228.5 420.4L232.6 420.2 M227.6 435.0L232.7 436.2 M227.1 445.0L220.8 444.9 M226.2 331.9L221.0 332.3 M226.6 341.5L223.5 341.8 M237.3 337.2L237.0 332.7 M250.7 336.8L251.3 332.8 M271.2 331.3L267.3 329.3 M270.0 338.6L263.3 338.4 M267.9 351.2L271.0 351.1 M278.0 362.8L272.4 360.1 M275.8 376.1L282.5 375.7 M318.2 350.2L322.9 347.5 M322.0 359.0L316.2 361.0 M231.1 407.1L228.3 404.3 M237.7 404.2L238.6 407.7 M336.4 364.9L335.4 361.2 M422.9 335.9L421.7 332.1 M391.9 430.0L397.2 426.9 M395.3 438.5L391.0 439.5 M402.1 440.3L400.8 436.8 M451.9 435.6L451.3 431.3 M478.3 331.7L480.8 326.7 M486.1 339.0L488.4 336.4 M492.1 351.0L487.1 355.3 M495.6 359.6L498.7 358.6 M500.8 372.2L506.8 369.1 M505.5 385.3L500.1 386.0 M509.4 397.0L512.7 396.2 M512.2 408.6L515.2 407.7 M513.7 415.8L510.5 415.9 M516.5 429.9L522.6 428.2 M518.6 439.6L515.8 441.3 M491.7 430.4L491.3 433.8 M502.9 432.5L503.5 426.9 M541.6 333.9L537.3 335.8 M542.9 346.8L538.7 348.8 M544.2 359.9L538.8 361.1 M545.6 370.0L550.0 368.3 M546.7 377.9L551.3 378.4 M548.3 388.4L551.1 386.3 M551.1 396.1L547.8 397.0 M554.5 405.4L557.6 403.7 M558.3 415.9L561.5 414.7 M558.9 429.1L562.9 430.4 M558.3 436.4L554.1 435.8 M537.8 338.6L543.2 340.0 M537.8 350.6L544.0 349.2 M537.8 359.4L531.2 361.0 M537.8 369.2L541.7 369.9 M539.3 383.2L545.9 382.9 M542.8 395.1L539.4 395.8 M545.9 406.0L540.8 408.3 M548.4 414.7L543.0 416.4 M551.3 424.8L554.3 425.0 M554.2 435.1L548.2 435.6 M556.4 445.5L562.4 443.9 M542.3 349.8L542.5 353.2 M525.5 372.6L526.0 369.3 M546.0 365.4L547.7 359.6 M526.3 393.4L528.5 387.4 M516.0 420.4L519.6 420.6 M517.9 429.5L523.6 429.2 M519.6 438.1L514.5 440.1 M587.5 352.1L584.0 352.8 M590.3 366.1L595.6 365.5 M592.0 374.9L589.1 376.1 M593.5 383.0L587.8 382.5 M595.0 391.2L591.6 391.8 M597.3 403.1L590.5 404.6 M599.9 413.7L602.3 410.5 M592.0 374.9L588.0 374.3 M594.2 386.2L590.4 388.3 M596.0 394.9L600.1 394.1 M612.0 419.1L609.2 424.4 M620.4 421.7L619.6 427.1 M631.3 423.6L631.2 420.1 M643.3 425.8L644.0 422.6 M652.5 427.9L651.3 432.9 M661.5 430.6L662.9 427.0 M671.9 433.6L673.3 430.9 M683.7 434.1L685.0 437.2 M696.0 427.4L699.5 430.3 M701.3 422.7L704.6 426.9 M637.4 424.4L635.4 427.9 M644.5 426.1L644.7 421.4 M597.5 423.8L601.9 427.1 M593.2 431.2L590.1 429.1 M627.9 415.5L632.3 413.2 M629.9 329.3L632.6 334.5 M644.5 328.6L643.8 331.8 M652.9 329.5L653.8 325.6 M660.8 330.4L661.1 336.3 M671.9 332.9L668.5 337.6 M685.9 337.8L682.4 342.2 M694.0 340.8L697.0 338.6 M703.4 361.4L708.7 364.2 M695.5 373.0L690.8 370.4 M625.7 370.5L623.1 374.6 M631.8 374.2L634.8 370.6 M642.8 376.6L642.7 382.8 M654.4 377.7L653.6 374.3 M662.3 378.5L661.6 374.2 M669.5 379.2L670.2 375.7 M676.7 380.1L675.8 374.2 M688.3 381.8L686.6 385.2 M660.8 378.2L661.3 381.6 M668.7 378.7L671.1 372.4 M748.2 330.3L743.3 330.3 M745.0 343.2L749.1 343.8 M742.8 352.0L738.8 351.7 M739.7 364.4L733.6 361.6 M736.8 375.8L730.7 373.8 M703.5 346.7L703.4 351.7 M712.7 351.4L715.8 347.3 M722.0 361.8L725.4 357.7 M729.0 369.6L732.5 367.4 M733.9 375.2L730.3 378.5 M742.8 385.2L748.2 381.0 M708.2 352.2L712.1 353.7 M701.6 362.9L699.2 360.1 M713.9 350.6L715.9 345.4 M723.1 355.1L719.2 360.4 M732.4 359.8L733.8 355.5 M733.7 381.1L736.4 384.7 M728.3 388.1L725.7 385.7 M721.5 398.6L725.6 400.2 M717.6 405.8L713.2 402.3 M713.6 413.2L708.2 411.3 M707.5 419.4L705.5 415.0 M700.6 425.1L702.6 428.6 M748.9 398.4L754.5 402.4 M743.6 409.0L740.2 407.7 M739.8 416.6L742.9 418.5 M736.1 424.3L741.6 428.5 M730.5 435.9L726.5 435.2 M710.9 379.5L709.7 384.2 M722.4 387.2L719.2 392.0" stroke="#e4302a" stroke-width="0.9"/>
<path d="M515.0 322.1 L527.5 321.0 L540.0 312.7 L546.1 302.4 L556.5 288.9 L573.1 277.4 L598.1 260.8 L625.0 247.3 L660.3 235.9 L705.0 223.5 L731.1 215.2 L738.4 213.0" stroke="#e4302a" stroke-width="6.2"/>
<path d="M514.9 320.9 L527.1 319.8 L539.1 311.8 L545.1 301.7 L555.6 288.0 L572.4 276.4 L597.5 259.7 L624.5 246.2 L659.9 234.7 L704.6 222.3 L730.7 214.0 L738.0 211.8" stroke="#fbe3e0" stroke-width="0.55"/>
<path d="M515.1 323.3 L527.9 322.2 L540.9 313.6 L547.1 303.1 L557.4 289.8 L573.8 278.4 L598.7 261.9 L625.5 248.4 L660.7 237.1 L705.4 224.7 L731.5 216.4 L738.8 214.2" stroke="#fbe3e0" stroke-width="0.55"/>
<path d="M549.0 304.6 L559.0 291.5 L575.1 280.4 L599.9 263.9 L626.4 250.6 L661.3 239.3 L706.0 227.0" stroke="#2d2b8e" stroke-width="1.5"/>
<path d="M157.5 326.0 L180.3 331.1 L217.7 352.9 L248.8 371.6 L255.0 376.8 L277.9 377.8 L302.8 381.0 L335.0 366.4" stroke="#e4302a" stroke-width="5.2"/>
<path d="M157.7 325.0 L180.7 330.1 L218.2 352.0 L249.4 370.8 L255.4 375.8 L278.0 376.8 L302.6 380.0 L334.6 365.5" stroke="#fbe3e0" stroke-width="0.55"/>
<path d="M157.3 327.0 L179.9 332.1 L217.2 353.8 L248.2 372.4 L254.6 377.8 L277.8 378.8 L303.0 382.0 L335.4 367.3" stroke="#fbe3e0" stroke-width="0.55"/>
<path d="M330.0 371.6 L371.5 359.1 L417.2 340.5 L460.0 328.0" stroke="#e4302a" stroke-width="5.2"/>
<path d="M329.7 370.6 L371.2 358.1 L416.9 339.5 L459.7 327.0" stroke="#fbe3e0" stroke-width="0.55"/>
<path d="M330.3 372.6 L371.8 360.1 L417.5 341.5 L460.3 329.0" stroke="#fbe3e0" stroke-width="0.55"/>
<rect x="179.8" y="218.1" width="5.2" height="3.8" fill="#e4302a" stroke="#e4302a" stroke-width="0.6"/><rect x="181.1" y="219.4" width="2.6" height="1.2" fill="#f6b0aa"/>
<rect x="205.7" y="216.1" width="5.2" height="3.8" fill="#e4302a" stroke="#e4302a" stroke-width="0.6"/><rect x="207.0" y="217.4" width="2.6" height="1.2" fill="#f6b0aa"/>
<rect x="224.4" y="214.6" width="5.2" height="3.8" fill="#e4302a" stroke="#e4302a" stroke-width="0.6"/><rect x="225.7" y="215.9" width="2.6" height="1.2" fill="#f6b0aa"/>
<rect x="241.0" y="237.8" width="5.2" height="3.8" fill="#e4302a" stroke="#e4302a" stroke-width="0.6"/><rect x="242.3" y="239.1" width="2.6" height="1.2" fill="#f6b0aa"/>
<rect x="226.4" y="322.1" width="5.2" height="3.8" fill="#e4302a" stroke="#e4302a" stroke-width="0.6"/><rect x="227.7" y="323.4" width="2.6" height="1.2" fill="#f6b0aa"/>
<rect x="151.7" y="317.1" width="5.2" height="3.8" fill="#e4302a" stroke="#e4302a" stroke-width="0.6"/><rect x="153.0" y="318.4" width="2.6" height="1.2" fill="#f6b0aa"/>
<rect x="322.0" y="248.9" width="5.2" height="3.8" fill="#e4302a" stroke="#e4302a" stroke-width="0.6"/><rect x="323.3" y="250.2" width="2.6" height="1.2" fill="#f6b0aa"/>
<rect x="355.4" y="242.3" width="5.2" height="3.8" fill="#e4302a" stroke="#e4302a" stroke-width="0.6"/><rect x="356.7" y="243.6" width="2.6" height="1.2" fill="#f6b0aa"/>
<rect x="376.2" y="280.7" width="5.2" height="3.8" fill="#e4302a" stroke="#e4302a" stroke-width="0.6"/><rect x="377.5" y="282.0" width="2.6" height="1.2" fill="#f6b0aa"/>
<rect x="466.5" y="272.4" width="5.2" height="3.8" fill="#e4302a" stroke="#e4302a" stroke-width="0.6"/><rect x="467.8" y="273.7" width="2.6" height="1.2" fill="#f6b0aa"/>
<rect x="508.0" y="282.8" width="5.2" height="3.8" fill="#e4302a" stroke="#e4302a" stroke-width="0.6"/><rect x="509.3" y="284.1" width="2.6" height="1.2" fill="#f6b0aa"/>
<rect x="486.2" y="299.4" width="5.2" height="3.8" fill="#e4302a" stroke="#e4302a" stroke-width="0.6"/><rect x="487.5" y="300.7" width="2.6" height="1.2" fill="#f6b0aa"/>
<rect x="531.1" y="306.7" width="5.2" height="3.8" fill="#e4302a" stroke="#e4302a" stroke-width="0.6"/><rect x="532.4" y="308.0" width="2.6" height="1.2" fill="#f6b0aa"/>
<rect x="542.5" y="293.2" width="5.2" height="3.8" fill="#e4302a" stroke="#e4302a" stroke-width="0.6"/><rect x="543.8" y="294.5" width="2.6" height="1.2" fill="#f6b0aa"/>
<rect x="550.8" y="279.7" width="5.2" height="3.8" fill="#e4302a" stroke="#e4302a" stroke-width="0.6"/><rect x="552.1" y="281.0" width="2.6" height="1.2" fill="#f6b0aa"/>
<rect x="562.2" y="273.5" width="5.2" height="3.8" fill="#e4302a" stroke="#e4302a" stroke-width="0.6"/><rect x="563.5" y="274.8" width="2.6" height="1.2" fill="#f6b0aa"/>
<rect x="574.7" y="264.1" width="5.2" height="3.8" fill="#e4302a" stroke="#e4302a" stroke-width="0.6"/><rect x="576.0" y="265.4" width="2.6" height="1.2" fill="#f6b0aa"/>
<rect x="583.0" y="278.7" width="5.2" height="3.8" fill="#e4302a" stroke="#e4302a" stroke-width="0.6"/><rect x="584.3" y="280.0" width="2.6" height="1.2" fill="#f6b0aa"/>
<rect x="602.7" y="249.6" width="5.2" height="3.8" fill="#e4302a" stroke="#e4302a" stroke-width="0.6"/><rect x="604.0" y="250.9" width="2.6" height="1.2" fill="#f6b0aa"/>
<rect x="614.1" y="240.2" width="5.2" height="3.8" fill="#e4302a" stroke="#e4302a" stroke-width="0.6"/><rect x="615.4" y="241.5" width="2.6" height="1.2" fill="#f6b0aa"/>
<rect x="621.4" y="255.8" width="5.2" height="3.8" fill="#e4302a" stroke="#e4302a" stroke-width="0.6"/><rect x="622.7" y="257.1" width="2.6" height="1.2" fill="#f6b0aa"/>
<rect x="631.8" y="276.6" width="5.2" height="3.8" fill="#e4302a" stroke="#e4302a" stroke-width="0.6"/><rect x="633.1" y="277.9" width="2.6" height="1.2" fill="#f6b0aa"/>
<rect x="687.9" y="221.1" width="5.2" height="3.8" fill="#e4302a" stroke="#e4302a" stroke-width="0.6"/><rect x="689.2" y="222.4" width="2.6" height="1.2" fill="#f6b0aa"/>
<rect x="695.1" y="229.9" width="5.2" height="3.8" fill="#e4302a" stroke="#e4302a" stroke-width="0.6"/><rect x="696.4" y="231.2" width="2.6" height="1.2" fill="#f6b0aa"/>
<rect x="664.0" y="241.3" width="5.2" height="3.8" fill="#e4302a" stroke="#e4302a" stroke-width="0.6"/><rect x="665.3" y="242.6" width="2.6" height="1.2" fill="#f6b0aa"/>
<rect x="683.7" y="279.7" width="5.2" height="3.8" fill="#e4302a" stroke="#e4302a" stroke-width="0.6"/><rect x="685.0" y="281.0" width="2.6" height="1.2" fill="#f6b0aa"/>
<rect x="520.7" y="312.9" width="5.2" height="3.8" fill="#e4302a" stroke="#e4302a" stroke-width="0.6"/><rect x="522.0" y="314.2" width="2.6" height="1.2" fill="#f6b0aa"/>
<rect x="734.8" y="235.1" width="5.2" height="3.8" fill="#e4302a" stroke="#e4302a" stroke-width="0.6"/><rect x="736.1" y="236.4" width="2.6" height="1.2" fill="#f6b0aa"/>
<rect x="768.0" y="248.6" width="5.2" height="3.8" fill="#e4302a" stroke="#e4302a" stroke-width="0.6"/><rect x="769.3" y="249.9" width="2.6" height="1.2" fill="#f6b0aa"/>
<rect x="770.1" y="268.3" width="5.2" height="3.8" fill="#e4302a" stroke="#e4302a" stroke-width="0.6"/><rect x="771.4" y="269.6" width="2.6" height="1.2" fill="#f6b0aa"/>
<rect x="769.0" y="216.4" width="5.2" height="3.8" fill="#e4302a" stroke="#e4302a" stroke-width="0.6"/><rect x="770.3" y="217.7" width="2.6" height="1.2" fill="#f6b0aa"/>
<rect x="770.1" y="235.1" width="5.2" height="3.8" fill="#e4302a" stroke="#e4302a" stroke-width="0.6"/><rect x="771.4" y="236.4" width="2.6" height="1.2" fill="#f6b0aa"/>
<rect x="760.7" y="299.4" width="5.2" height="3.8" fill="#e4302a" stroke="#e4302a" stroke-width="0.6"/><rect x="762.0" y="300.7" width="2.6" height="1.2" fill="#f6b0aa"/>
<rect x="742.0" y="303.6" width="5.2" height="3.8" fill="#e4302a" stroke="#e4302a" stroke-width="0.6"/><rect x="743.3" y="304.9" width="2.6" height="1.2" fill="#f6b0aa"/>
<rect x="700.4" y="318.1" width="5.2" height="3.8" fill="#e4302a" stroke="#e4302a" stroke-width="0.6"/><rect x="701.7" y="319.4" width="2.6" height="1.2" fill="#f6b0aa"/>
<rect x="187.0" y="340.6" width="5.2" height="3.8" fill="#e4302a" stroke="#e4302a" stroke-width="0.6"/><rect x="188.3" y="341.9" width="2.6" height="1.2" fill="#f6b0aa"/>
<rect x="228.6" y="348.9" width="5.2" height="3.8" fill="#e4302a" stroke="#e4302a" stroke-width="0.6"/><rect x="229.9" y="350.2" width="2.6" height="1.2" fill="#f6b0aa"/>
<rect x="246.2" y="377.0" width="5.2" height="3.8" fill="#e4302a" stroke="#e4302a" stroke-width="0.6"/><rect x="247.5" y="378.3" width="2.6" height="1.2" fill="#f6b0aa"/>
<rect x="275.3" y="381.1" width="5.2" height="3.8" fill="#e4302a" stroke="#e4302a" stroke-width="0.6"/><rect x="276.6" y="382.4" width="2.6" height="1.2" fill="#f6b0aa"/>
<rect x="298.1" y="384.2" width="5.2" height="3.8" fill="#e4302a" stroke="#e4302a" stroke-width="0.6"/><rect x="299.4" y="385.5" width="2.6" height="1.2" fill="#f6b0aa"/>
<rect x="305.4" y="370.7" width="5.2" height="3.8" fill="#e4302a" stroke="#e4302a" stroke-width="0.6"/><rect x="306.7" y="372.0" width="2.6" height="1.2" fill="#f6b0aa"/>
<rect x="230.6" y="384.1" width="5.2" height="3.8" fill="#e4302a" stroke="#e4302a" stroke-width="0.6"/><rect x="231.9" y="385.4" width="2.6" height="1.2" fill="#f6b0aa"/>
<rect x="245.9" y="377.5" width="5.2" height="3.8" fill="#e4302a" stroke="#e4302a" stroke-width="0.6"/><rect x="247.2" y="378.8" width="2.6" height="1.2" fill="#f6b0aa"/>
<rect x="219.2" y="433.7" width="5.2" height="3.8" fill="#e4302a" stroke="#e4302a" stroke-width="0.6"/><rect x="220.5" y="435.0" width="2.6" height="1.2" fill="#f6b0aa"/>
<rect x="265.9" y="358.3" width="5.2" height="3.8" fill="#e4302a" stroke="#e4302a" stroke-width="0.6"/><rect x="267.2" y="359.6" width="2.6" height="1.2" fill="#f6b0aa"/>
<rect x="378.3" y="345.8" width="5.2" height="3.8" fill="#e4302a" stroke="#e4302a" stroke-width="0.6"/><rect x="379.6" y="347.1" width="2.6" height="1.2" fill="#f6b0aa"/>
<rect x="387.6" y="361.4" width="5.2" height="3.8" fill="#e4302a" stroke="#e4302a" stroke-width="0.6"/><rect x="388.9" y="362.7" width="2.6" height="1.2" fill="#f6b0aa"/>
<rect x="466.5" y="348.9" width="5.2" height="3.8" fill="#e4302a" stroke="#e4302a" stroke-width="0.6"/><rect x="467.8" y="350.2" width="2.6" height="1.2" fill="#f6b0aa"/>
<rect x="468.6" y="353.1" width="5.2" height="3.8" fill="#e4302a" stroke="#e4302a" stroke-width="0.6"/><rect x="469.9" y="354.4" width="2.6" height="1.2" fill="#f6b0aa"/>
<rect x="470.7" y="364.5" width="5.2" height="3.8" fill="#e4302a" stroke="#e4302a" stroke-width="0.6"/><rect x="472.0" y="365.8" width="2.6" height="1.2" fill="#f6b0aa"/>
<rect x="483.1" y="331.3" width="5.2" height="3.8" fill="#e4302a" stroke="#e4302a" stroke-width="0.6"/><rect x="484.4" y="332.6" width="2.6" height="1.2" fill="#f6b0aa"/>
<rect x="491.4" y="344.8" width="5.2" height="3.8" fill="#e4302a" stroke="#e4302a" stroke-width="0.6"/><rect x="492.7" y="346.1" width="2.6" height="1.2" fill="#f6b0aa"/>
<rect x="506.0" y="371.8" width="5.2" height="3.8" fill="#e4302a" stroke="#e4302a" stroke-width="0.6"/><rect x="507.3" y="373.1" width="2.6" height="1.2" fill="#f6b0aa"/>
<rect x="502.9" y="394.6" width="5.2" height="3.8" fill="#e4302a" stroke="#e4302a" stroke-width="0.6"/><rect x="504.2" y="395.9" width="2.6" height="1.2" fill="#f6b0aa"/>
<rect x="491.4" y="401.9" width="5.2" height="3.8" fill="#e4302a" stroke="#e4302a" stroke-width="0.6"/><rect x="492.7" y="403.2" width="2.6" height="1.2" fill="#f6b0aa"/>
<rect x="488.3" y="428.9" width="5.2" height="3.8" fill="#e4302a" stroke="#e4302a" stroke-width="0.6"/><rect x="489.6" y="430.2" width="2.6" height="1.2" fill="#f6b0aa"/>
<rect x="495.6" y="427.8" width="5.2" height="3.8" fill="#e4302a" stroke="#e4302a" stroke-width="0.6"/><rect x="496.9" y="429.1" width="2.6" height="1.2" fill="#f6b0aa"/>
<rect x="386.6" y="423.7" width="5.2" height="3.8" fill="#e4302a" stroke="#e4302a" stroke-width="0.6"/><rect x="387.9" y="425.0" width="2.6" height="1.2" fill="#f6b0aa"/>
<rect x="405.3" y="435.1" width="5.2" height="3.8" fill="#e4302a" stroke="#e4302a" stroke-width="0.6"/><rect x="406.6" y="436.4" width="2.6" height="1.2" fill="#f6b0aa"/>
<rect x="395.9" y="415.4" width="5.2" height="3.8" fill="#e4302a" stroke="#e4302a" stroke-width="0.6"/><rect x="397.2" y="416.7" width="2.6" height="1.2" fill="#f6b0aa"/>
<rect x="535.2" y="335.4" width="5.2" height="3.8" fill="#e4302a" stroke="#e4302a" stroke-width="0.6"/><rect x="536.5" y="336.7" width="2.6" height="1.2" fill="#f6b0aa"/>
<rect x="543.5" y="326.6" width="5.2" height="3.8" fill="#e4302a" stroke="#e4302a" stroke-width="0.6"/><rect x="544.8" y="327.9" width="2.6" height="1.2" fill="#f6b0aa"/>
<rect x="521.7" y="326.6" width="5.2" height="3.8" fill="#e4302a" stroke="#e4302a" stroke-width="0.6"/><rect x="523.0" y="327.9" width="2.6" height="1.2" fill="#f6b0aa"/>
<rect x="535.2" y="398.8" width="5.2" height="3.8" fill="#e4302a" stroke="#e4302a" stroke-width="0.6"/><rect x="536.5" y="400.1" width="2.6" height="1.2" fill="#f6b0aa"/>
<rect x="546.7" y="396.7" width="5.2" height="3.8" fill="#e4302a" stroke="#e4302a" stroke-width="0.6"/><rect x="548.0" y="398.0" width="2.6" height="1.2" fill="#f6b0aa"/>
<rect x="561.2" y="425.8" width="5.2" height="3.8" fill="#e4302a" stroke="#e4302a" stroke-width="0.6"/><rect x="562.5" y="427.1" width="2.6" height="1.2" fill="#f6b0aa"/>
<rect x="587.2" y="344.8" width="5.2" height="3.8" fill="#e4302a" stroke="#e4302a" stroke-width="0.6"/><rect x="588.5" y="346.1" width="2.6" height="1.2" fill="#f6b0aa"/>
<rect x="611.0" y="421.6" width="5.2" height="3.8" fill="#e4302a" stroke="#e4302a" stroke-width="0.6"/><rect x="612.3" y="422.9" width="2.6" height="1.2" fill="#f6b0aa"/>
<rect x="617.3" y="410.2" width="5.2" height="3.8" fill="#e4302a" stroke="#e4302a" stroke-width="0.6"/><rect x="618.6" y="411.5" width="2.6" height="1.2" fill="#f6b0aa"/>
<rect x="592.3" y="410.2" width="5.2" height="3.8" fill="#e4302a" stroke="#e4302a" stroke-width="0.6"/><rect x="593.6" y="411.5" width="2.6" height="1.2" fill="#f6b0aa"/>
<rect x="599.6" y="411.2" width="5.2" height="3.8" fill="#e4302a" stroke="#e4302a" stroke-width="0.6"/><rect x="600.9" y="412.5" width="2.6" height="1.2" fill="#f6b0aa"/>
<rect x="671.2" y="422.7" width="5.2" height="3.8" fill="#e4302a" stroke="#e4302a" stroke-width="0.6"/><rect x="672.5" y="424.0" width="2.6" height="1.2" fill="#f6b0aa"/>
<rect x="691.0" y="423.7" width="5.2" height="3.8" fill="#e4302a" stroke="#e4302a" stroke-width="0.6"/><rect x="692.3" y="425.0" width="2.6" height="1.2" fill="#f6b0aa"/>
<rect x="700.3" y="417.5" width="5.2" height="3.8" fill="#e4302a" stroke="#e4302a" stroke-width="0.6"/><rect x="701.6" y="418.8" width="2.6" height="1.2" fill="#f6b0aa"/>
<rect x="678.5" y="434.1" width="5.2" height="3.8" fill="#e4302a" stroke="#e4302a" stroke-width="0.6"/><rect x="679.8" y="435.4" width="2.6" height="1.2" fill="#f6b0aa"/>
<rect x="635.9" y="368.7" width="5.2" height="3.8" fill="#e4302a" stroke="#e4302a" stroke-width="0.6"/><rect x="637.2" y="370.0" width="2.6" height="1.2" fill="#f6b0aa"/>
<rect x="683.7" y="375.9" width="5.2" height="3.8" fill="#e4302a" stroke="#e4302a" stroke-width="0.6"/><rect x="685.0" y="377.2" width="2.6" height="1.2" fill="#f6b0aa"/>
<rect x="683.7" y="383.2" width="5.2" height="3.8" fill="#e4302a" stroke="#e4302a" stroke-width="0.6"/><rect x="685.0" y="384.5" width="2.6" height="1.2" fill="#f6b0aa"/>
<rect x="689.9" y="385.3" width="5.2" height="3.8" fill="#e4302a" stroke="#e4302a" stroke-width="0.6"/><rect x="691.2" y="386.6" width="2.6" height="1.2" fill="#f6b0aa"/>
<rect x="693.0" y="350.0" width="5.2" height="3.8" fill="#e4302a" stroke="#e4302a" stroke-width="0.6"/><rect x="694.3" y="351.3" width="2.6" height="1.2" fill="#f6b0aa"/>
<rect x="700.3" y="347.9" width="5.2" height="3.8" fill="#e4302a" stroke="#e4302a" stroke-width="0.6"/><rect x="701.6" y="349.2" width="2.6" height="1.2" fill="#f6b0aa"/>
<rect x="689.9" y="335.4" width="5.2" height="3.8" fill="#e4302a" stroke="#e4302a" stroke-width="0.6"/><rect x="691.2" y="336.7" width="2.6" height="1.2" fill="#f6b0aa"/>
<rect x="729.6" y="364.5" width="5.2" height="3.8" fill="#e4302a" stroke="#e4302a" stroke-width="0.6"/><rect x="730.9" y="365.8" width="2.6" height="1.2" fill="#f6b0aa"/>
<rect x="756.6" y="389.4" width="5.2" height="3.8" fill="#e4302a" stroke="#e4302a" stroke-width="0.6"/><rect x="757.9" y="390.7" width="2.6" height="1.2" fill="#f6b0aa"/>
<rect x="747.2" y="336.5" width="5.2" height="3.8" fill="#e4302a" stroke="#e4302a" stroke-width="0.6"/><rect x="748.5" y="337.8" width="2.6" height="1.2" fill="#f6b0aa"/>
<rect x="741.0" y="356.2" width="5.2" height="3.8" fill="#e4302a" stroke="#e4302a" stroke-width="0.6"/><rect x="742.3" y="357.5" width="2.6" height="1.2" fill="#f6b0aa"/>
<rect x="723.4" y="397.7" width="5.2" height="3.8" fill="#e4302a" stroke="#e4302a" stroke-width="0.6"/><rect x="724.7" y="399.0" width="2.6" height="1.2" fill="#f6b0aa"/>
<rect x="700.5" y="347.9" width="5.2" height="3.8" fill="#e4302a" stroke="#e4302a" stroke-width="0.6"/><rect x="701.8" y="349.2" width="2.6" height="1.2" fill="#f6b0aa"/>
<rect x="226.5" y="276.7" width="5" height="3.6" fill="#2d2b8e" stroke="#2d2b8e" stroke-width="0.6"/>
<rect x="224.5" y="309.9" width="5" height="3.6" fill="#2d2b8e" stroke="#2d2b8e" stroke-width="0.6"/>
<rect x="297.2" y="299.5" width="5" height="3.6" fill="#2d2b8e" stroke="#2d2b8e" stroke-width="0.6"/>
<rect x="297.2" y="308.9" width="5" height="3.6" fill="#2d2b8e" stroke="#2d2b8e" stroke-width="0.6"/>
<rect x="326.3" y="305.8" width="5" height="3.6" fill="#2d2b8e" stroke="#2d2b8e" stroke-width="0.6"/>
<rect x="358.6" y="254.9" width="5" height="3.6" fill="#2d2b8e" stroke="#2d2b8e" stroke-width="0.6"/>
<rect x="349.5" y="287.7" width="5" height="3.6" fill="#2d2b8e" stroke="#2d2b8e" stroke-width="0.6"/>
<rect x="397.1" y="226.8" width="5" height="3.6" fill="#2d2b8e" stroke="#2d2b8e" stroke-width="0.6"/>
<rect x="463.5" y="299.5" width="5" height="3.6" fill="#2d2b8e" stroke="#2d2b8e" stroke-width="0.6"/>
<rect x="385.5" y="211.2" width="5" height="3.6" fill="#2d2b8e" stroke="#2d2b8e" stroke-width="0.6"/>
<rect x="631.9" y="247.6" width="5" height="3.6" fill="#2d2b8e" stroke="#2d2b8e" stroke-width="0.6"/>
<rect x="553.0" y="305.8" width="5" height="3.6" fill="#2d2b8e" stroke="#2d2b8e" stroke-width="0.6"/>
<rect x="777.5" y="250.7" width="5" height="3.6" fill="#2d2b8e" stroke="#2d2b8e" stroke-width="0.6"/>
<rect x="213.1" y="340.7" width="5" height="3.6" fill="#2d2b8e" stroke="#2d2b8e" stroke-width="0.6"/>
<rect x="208.9" y="356.9" width="5" height="3.6" fill="#2d2b8e" stroke="#2d2b8e" stroke-width="0.6"/>
<rect x="230.7" y="371.9" width="5" height="3.6" fill="#2d2b8e" stroke="#2d2b8e" stroke-width="0.6"/>
<rect x="219.3" y="401.0" width="5" height="3.6" fill="#2d2b8e" stroke="#2d2b8e" stroke-width="0.6"/>
<rect x="230.7" y="372.9" width="5" height="3.6" fill="#2d2b8e" stroke="#2d2b8e" stroke-width="0.6"/>
<rect x="485.3" y="362.5" width="5" height="3.6" fill="#2d2b8e" stroke="#2d2b8e" stroke-width="0.6"/>
<rect x="483.2" y="370.8" width="5" height="3.6" fill="#2d2b8e" stroke="#2d2b8e" stroke-width="0.6"/>
<rect x="498.8" y="415.5" width="5" height="3.6" fill="#2d2b8e" stroke="#2d2b8e" stroke-width="0.6"/>
<rect x="509.2" y="422.8" width="5" height="3.6" fill="#2d2b8e" stroke="#2d2b8e" stroke-width="0.6"/>
<rect x="480.1" y="425.9" width="5" height="3.6" fill="#2d2b8e" stroke="#2d2b8e" stroke-width="0.6"/>
<rect x="396.0" y="421.7" width="5" height="3.6" fill="#2d2b8e" stroke="#2d2b8e" stroke-width="0.6"/>
<rect x="531.2" y="343.8" width="5" height="3.6" fill="#2d2b8e" stroke="#2d2b8e" stroke-width="0.6"/>
<rect x="530.1" y="357.3" width="5" height="3.6" fill="#2d2b8e" stroke="#2d2b8e" stroke-width="0.6"/>
<rect x="530.1" y="381.2" width="5" height="3.6" fill="#2d2b8e" stroke="#2d2b8e" stroke-width="0.6"/>
<rect x="530.1" y="389.5" width="5" height="3.6" fill="#2d2b8e" stroke="#2d2b8e" stroke-width="0.6"/>
<rect x="535.3" y="406.2" width="5" height="3.6" fill="#2d2b8e" stroke="#2d2b8e" stroke-width="0.6"/>
<rect x="540.5" y="411.3" width="5" height="3.6" fill="#2d2b8e" stroke="#2d2b8e" stroke-width="0.6"/>
<rect x="539.5" y="417.6" width="5" height="3.6" fill="#2d2b8e" stroke="#2d2b8e" stroke-width="0.6"/>
<rect x="539.5" y="436.2" width="5" height="3.6" fill="#2d2b8e" stroke="#2d2b8e" stroke-width="0.6"/>
<rect x="718.3" y="249.7" width="5" height="3.6" fill="#2d2b8e" stroke="#2d2b8e" stroke-width="0.6"/>
<rect x="188.2" y="281.5" width="5" height="3.6" fill="#2d2b8e" stroke="#2d2b8e" stroke-width="0.6"/>
<rect x="272.7" y="215.0" width="4" height="2.5" fill="none" stroke="#2a9c6c" stroke-width="1.3"/>
<rect x="740.5" y="311.7" width="4" height="6" fill="none" stroke="#2a9c6c" stroke-width="1.3"/>
<rect x="171.0" y="375.3" width="9" height="2.8" fill="none" stroke="#2a9c6c" stroke-width="1.3"/>
<rect x="606.4" y="414.2" width="18.6" height="6.2" fill="none" stroke="#2a9c6c" stroke-width="1.3"/>
<rect x="667.6" y="382.0" width="12.5" height="4.1" fill="none" stroke="#2a9c6c" stroke-width="1.3"/>
<path d="M152.5 407 V437.5 H182.5" stroke="#111" stroke-width="1"/><rect x="150" y="435" width="5" height="5" stroke="#111" stroke-width="1"/>
<path d="M154.5 396 L157.5 400 L160.5 396 M157.5 400 V404" stroke="#222" stroke-width="1"/>
<path d="M186.5 429 L193.5 436 M193.5 429 L186.5 436" stroke="#222" stroke-width="1"/>
</g></svg>
</body></html>
